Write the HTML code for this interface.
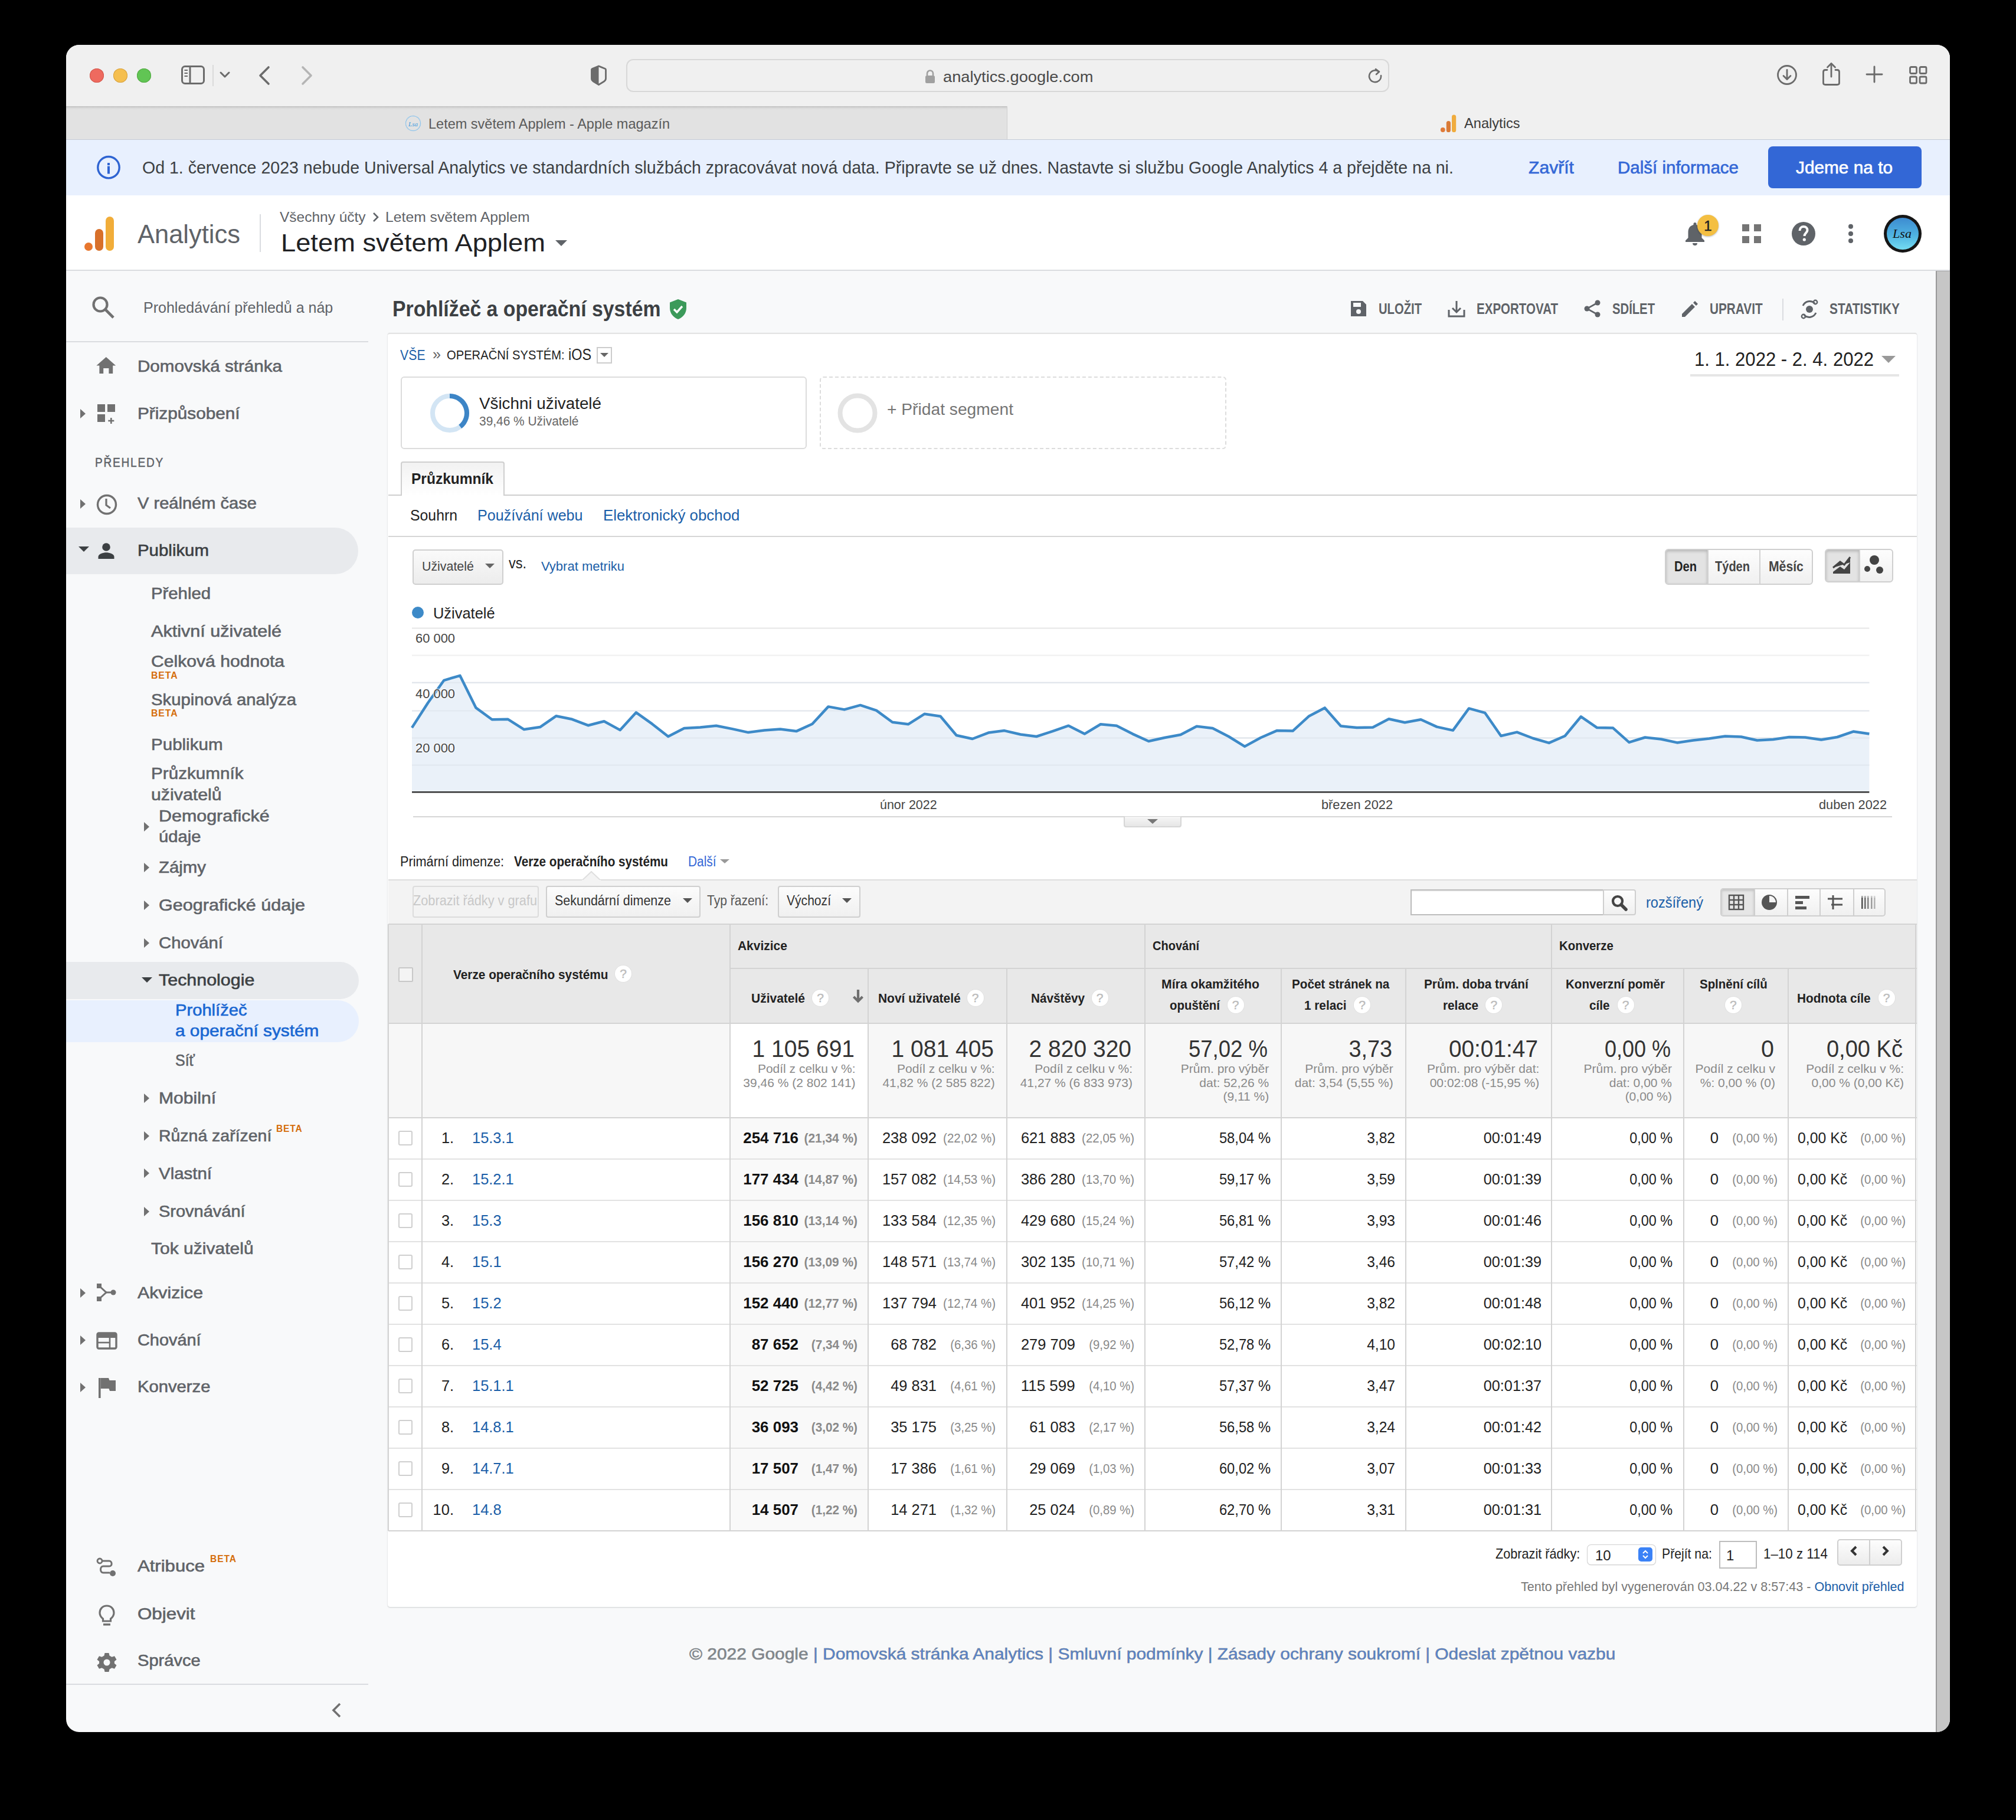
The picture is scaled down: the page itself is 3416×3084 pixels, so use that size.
<!DOCTYPE html>
<html><head><meta charset="utf-8"><style>
html,body{margin:0;padding:0;width:3416px;height:3084px;overflow:hidden;background:#000;}
.t{position:absolute;line-height:0;white-space:nowrap;}
.b{position:absolute;box-sizing:border-box;}
#win{position:absolute;left:0;top:0;width:3416px;height:3084px;clip-path:inset(76px 112px 149px 112px round 22px);}
</style></head><body><div id="win">
<div class="b" style="left:112.0px;top:76.0px;width:3192.0px;height:2859.0px;background:#f8f9fa;"></div>
<div class="b" style="left:112.0px;top:76.0px;width:3192.0px;height:160.0px;background:#f0f0f0;"></div>
<div class="b" style="left:112.0px;top:180.0px;width:1595.0px;height:56.0px;background:linear-gradient(#c9c9c9 0px,#bcbcbc 1px,#d6d6d6 2px,#e2e2e2 6px,#e2e2e2);border-right:1.5px solid #cfcfcf;"></div>
<div class="b" style="left:112.0px;top:235.5px;width:3192.0px;height:1.5px;background:#c6ccd6;"></div>
<div class="b" style="left:152px;top:116px;width:24px;height:24px;border-radius:50%;background:#ee6a5f;box-shadow:inset 0 0 0 1px #d2574c;"></div>
<div class="b" style="left:192px;top:116px;width:24px;height:24px;border-radius:50%;background:#f5bf4f;box-shadow:inset 0 0 0 1px #d6a243;"></div>
<div class="b" style="left:232px;top:116px;width:24px;height:24px;border-radius:50%;background:#61c554;box-shadow:inset 0 0 0 1px #52a842;"></div>
<svg class="b" style="left:304.0px;top:108.0px" width="46" height="38" viewBox="0 0 46 38"><rect x="4.5" y="4.5" width="37" height="29" rx="5" fill="none" stroke="#6b6b6b" stroke-width="3"/><line x1="18" y1="5" x2="18" y2="33" stroke="#6b6b6b" stroke-width="3"/><line x1="8.5" y1="11" x2="14" y2="11" stroke="#6b6b6b" stroke-width="2"/><line x1="8.5" y1="16" x2="14" y2="16" stroke="#6b6b6b" stroke-width="2"/><line x1="8.5" y1="21" x2="14" y2="21" stroke="#6b6b6b" stroke-width="2"/></svg>
<div class="b" style="left:360.0px;top:110.0px;width:2.0px;height:36.0px;background:#dadada;"></div>
<svg class="b" style="left:370.0px;top:118.0px" width="22" height="18" viewBox="0 0 22 18"><polyline points="4,5 11,12 18,5" fill="none" stroke="#6b6b6b" stroke-width="3" stroke-linecap="round" stroke-linejoin="round"/></svg>
<svg class="b" style="left:432.0px;top:108.0px" width="32" height="40" viewBox="0 0 32 40"><polyline points="23,6 9,20 23,34" fill="none" stroke="#6b6b6b" stroke-width="3.6" stroke-linecap="round" stroke-linejoin="round"/></svg>
<svg class="b" style="left:504.0px;top:108.0px" width="32" height="40" viewBox="0 0 32 40"><polyline points="9,6 23,20 9,34" fill="none" stroke="#b5b5b5" stroke-width="3.6" stroke-linecap="round" stroke-linejoin="round"/></svg>
<svg class="b" style="left:996.0px;top:106.0px" width="36" height="42" viewBox="0 0 36 42"><path d="M18.5 6 L29.5 10.5 Q30.5 11 30.5 12 V27 Q30.5 30 27.5 32 L18.5 37.5 L9.5 32 Q6.5 30 6.5 27 V12 Q6.5 11 7.5 10.5 Z" fill="none" stroke="#6b6b6b" stroke-width="2.8" stroke-linejoin="round"/><path d="M18.5 5 L7 10 Q5.5 10.7 5.5 12 V27 Q5.5 30.5 9 32.7 L18.5 38.5 Z" fill="#6b6b6b"/></svg>
<div class="b" style="left:1061.0px;top:100.0px;width:1293.0px;height:56.0px;border:2px solid #d8d8d8;border-radius:12px;background:#f0f0f0;"></div>
<svg class="b" style="left:1566.0px;top:117.0px" width="20" height="26" viewBox="0 0 20 26"><path d="M5 11 V7.5 A5 5 0 0 1 15 7.5 V11" fill="none" stroke="#a0a0a0" stroke-width="2.6"/><rect x="2" y="11" width="16" height="13" rx="2.5" fill="#a0a0a0"/></svg>
<div class="t" style="left:1597.8px;top:129.5px;font-size:26px;color:#4a4a4a;font-weight:400;font-family:'Liberation Sans';transform:scaleX(1.0477);transform-origin:0 0;"><span id="t37878bb1dc">analytics.google.com</span></div>
<svg class="b" style="left:2314.0px;top:112.0px" width="32" height="32" viewBox="0 0 32 32"><path d="M22.5 9.5 A10 10 0 1 0 26 16" fill="none" stroke="#6b6b6b" stroke-width="2.6" stroke-linecap="round"/><polyline points="17,5 23,9.5 18,14" fill="none" stroke="#6b6b6b" stroke-width="2.6" stroke-linecap="round" stroke-linejoin="round"/></svg>
<svg class="b" style="left:3007.5px;top:107.0px" width="40" height="40" viewBox="0 0 40 40"><circle cx="20" cy="20" r="15.5" fill="none" stroke="#6b6b6b" stroke-width="2.8"/><line x1="20" y1="11.5" x2="20" y2="27" stroke="#6b6b6b" stroke-width="2.8" stroke-linecap="round"/><polyline points="14,21.5 20,27.5 26,21.5" fill="none" stroke="#6b6b6b" stroke-width="2.8" stroke-linecap="round" stroke-linejoin="round"/></svg>
<svg class="b" style="left:3083.0px;top:104.0px" width="40" height="44" viewBox="0 0 40 44"><path d="M13 14.5 H10 Q6.5 14.5 6.5 18 V36.5 Q6.5 39.5 10 39.5 H30 Q33.5 39.5 33.5 36.5 V18 Q33.5 14.5 30 14.5 H27" fill="none" stroke="#6b6b6b" stroke-width="2.8" stroke-linecap="round"/><line x1="20" y1="4" x2="20" y2="26" stroke="#6b6b6b" stroke-width="2.8" stroke-linecap="round"/><polyline points="13.5,10 20,3.5 26.5,10" fill="none" stroke="#6b6b6b" stroke-width="2.8" stroke-linecap="round" stroke-linejoin="round"/></svg>
<svg class="b" style="left:3159.5px;top:110.3px" width="32" height="32" viewBox="0 0 32 32"><line x1="16" y1="3" x2="16" y2="29" stroke="#6b6b6b" stroke-width="2.9" stroke-linecap="round"/><line x1="3" y1="16" x2="29" y2="16" stroke="#6b6b6b" stroke-width="2.9" stroke-linecap="round"/></svg>
<svg class="b" style="left:3232.0px;top:109.0px" width="36" height="36" viewBox="0 0 36 36"><rect x="4.5" y="4.5" width="11" height="11" rx="2" fill="none" stroke="#6b6b6b" stroke-width="2.8"/><rect x="21" y="4.5" width="11" height="11" rx="2" fill="none" stroke="#6b6b6b" stroke-width="2.8"/><rect x="4.5" y="21" width="11" height="11" rx="2" fill="none" stroke="#6b6b6b" stroke-width="2.8"/><rect x="21" y="21" width="11" height="11" rx="2" fill="none" stroke="#6b6b6b" stroke-width="2.8"/></svg>
<svg class="b" style="left:686.0px;top:195.0px" width="28" height="28" viewBox="0 0 28 28"><circle cx="14" cy="14" r="12.5" fill="none" stroke="#6bb8f0" stroke-width="1.3" stroke-dasharray="1.5 0.8"/><text x="14" y="18.5" font-family="Liberation Serif" font-style="italic" font-size="11" fill="#3a9be0" text-anchor="middle">Lsa</text></svg>
<div class="t" style="left:726.0px;top:209.6px;font-size:24px;color:#5a5a5a;font-weight:400;font-family:'Liberation Sans';transform:scaleX(0.9795);transform-origin:0 0;"><span id="ta626f930b1">Letem světem Applem - Apple magazín</span></div>
<svg class="b" style="left:2440.0px;top:193.0px" width="30" height="32" viewBox="0 0 30 32"><circle cx="4.8" cy="27" r="3.9" fill="#e07b39"/><rect x="10.8" y="12" width="7.2" height="19" rx="3.6" fill="#d97a37"/><rect x="20" y="1.5" width="7.2" height="29.5" rx="3.6" fill="#f0ac3e"/></svg>
<div class="t" style="left:2480.5px;top:208.6px;font-size:24px;color:#3a3a3a;font-weight:400;font-family:'Liberation Sans';transform:scaleX(0.9839);transform-origin:0 0;"><span id="t96d38b7646">Analytics</span></div>
<div class="b" style="left:112.0px;top:237.0px;width:3192.0px;height:94.0px;background:#e8f0fe;"></div>
<svg class="b" style="left:162.0px;top:262.0px" width="44" height="44" viewBox="0 0 44 44"><circle cx="22" cy="21.7" r="18.2" fill="none" stroke="#2f64d2" stroke-width="3.4"/><rect x="20" y="19.5" width="4" height="13" fill="#2f64d2"/><rect x="20" y="14" width="4" height="4" fill="#2f64d2"/></svg>
<div class="t" style="left:241.0px;top:284.1px;font-size:29px;color:#3c4043;font-weight:400;font-family:'Liberation Sans';transform:scaleX(0.9838);transform-origin:0 0;"><span id="t1c1a9b1fd3">Od 1. července 2023 nebude Universal Analytics ve standardních službách zpracovávat nová data. Připravte se už dnes. Nastavte si službu Google Analytics 4 a přejděte na ni.</span></div>
<div class="t" style="left:2590.0px;top:284.1px;font-size:29px;color:#3367d6;font-weight:400;font-family:'Liberation Sans';transform:scaleX(1.0387);transform-origin:0 0;-webkit-text-stroke:0.64px #3367d6;"><span id="tc9f0a72377">Zavřít</span></div>
<div class="t" style="left:2741.0px;top:284.1px;font-size:29px;color:#3367d6;font-weight:400;font-family:'Liberation Sans';transform:scaleX(1.0175);transform-origin:0 0;-webkit-text-stroke:0.64px #3367d6;"><span id="t374efb9448">Další informace</span></div>
<div class="b" style="left:2996.0px;top:248.0px;width:260.0px;height:71.0px;background:#3367d6;border-radius:8px;"></div>
<div class="t" style="left:3043.0px;top:284.1px;font-size:29px;color:#ffffff;font-weight:400;font-family:'Liberation Sans';transform:scaleX(1.0275);transform-origin:0 0;-webkit-text-stroke:0.64px #ffffff;"><span id="t1bced2fbbe">Jdeme na to</span></div>
<div class="b" style="left:112.0px;top:331.0px;width:3192.0px;height:127.0px;background:#ffffff;"></div>
<div class="b" style="left:112.0px;top:457.0px;width:3192.0px;height:2.0px;background:#dadce0;"></div>
<svg class="b" style="left:140.0px;top:362.0px" width="60" height="70" viewBox="0 0 60 70"><circle cx="10" cy="56" r="7" fill="#e8772e"/><rect x="21" y="26" width="14" height="37" rx="7" fill="#d8702a"/><rect x="39" y="5" width="14" height="58" rx="7" fill="#f1ad39"/></svg>
<div class="t" style="left:233.0px;top:396.9px;font-size:45px;color:#5f6368;font-weight:400;font-family:'Liberation Sans';transform:scaleX(0.9663);transform-origin:0 0;"><span id="t1309319357">Analytics</span></div>
<div class="b" style="left:440.0px;top:363.0px;width:2.0px;height:64.0px;background:#dadce0;"></div>
<div class="t" style="left:474.0px;top:367.6px;font-size:24px;color:#5f6368;font-weight:400;font-family:'Liberation Sans';transform:scaleX(1.0201);transform-origin:0 0;"><span id="t292f121d49">Všechny účty</span></div>
<svg class="b" style="left:628.0px;top:355.0px" width="18" height="26" viewBox="0 0 18 26"><polyline points="5,6 12,13 5,20" fill="none" stroke="#5f6368" stroke-width="2.6"/></svg>
<div class="t" style="left:653.0px;top:367.6px;font-size:24px;color:#5f6368;font-weight:400;font-family:'Liberation Sans';transform:scaleX(1.0305);transform-origin:0 0;"><span id="t0a57e2e249">Letem světem Applem</span></div>
<div class="t" style="left:476.0px;top:410.9px;font-size:43px;color:#202124;font-weight:400;font-family:'Liberation Sans';transform:scaleX(1.0531);transform-origin:0 0;"><span id="tfc0de8efe3">Letem světem Applem</span></div>
<svg class="b" style="left:938.0px;top:404.0px" width="26" height="16" viewBox="0 0 26 16"><polygon points="3,3 23,3 13,13" fill="#5f6368"/></svg>
<svg class="b" style="left:2850.0px;top:373.0px" width="44" height="50" viewBox="0 0 44 50"><path d="M22 4 C20.5 4 19.5 5 19.5 6.5 V8 C13.5 9.5 10.5 14 10.5 20 V30 L6 34.5 V37 H38 V34.5 L33.5 30 V20 C33.5 14 30.5 9.5 24.5 8 V6.5 C24.5 5 23.5 4 22 4 Z" fill="#5f6368"/><path d="M18 39 H26 A4 4 0 0 1 18 39 Z" fill="#5f6368"/></svg>
<div class="b" style="left:2876px;top:364px;width:36px;height:36px;border-radius:50%;background:#f4bf42;box-shadow:0 1px 3px rgba(0,0,0,0.3);"></div>
<div class="t" style="left:894.0px;top:382.6px;width:4000px;text-align:center;font-size:24px;color:#202124;font-weight:400;font-family:'Liberation Sans';-webkit-text-stroke:0.53px #202124;"><span id="tad9fb440c5">1</span></div>
<svg class="b" style="left:2950.0px;top:378.0px" width="36" height="36" viewBox="0 0 36 36"><rect x="2" y="2" width="12" height="12" fill="#757575"/><rect x="22" y="2" width="12" height="12" fill="#757575"/><rect x="2" y="22" width="12" height="12" fill="#757575"/><rect x="22" y="22" width="12" height="12" fill="#757575"/></svg>
<svg class="b" style="left:3034.0px;top:374.0px" width="44" height="44" viewBox="0 0 44 44"><circle cx="22" cy="22" r="20" fill="#5f6368"/><path d="M15.5 17 C15.5 12.5 18.5 10 22 10 C26 10 28.5 12.5 28.5 16 C28.5 20.5 23.5 21 23.5 26" fill="none" stroke="#fff" stroke-width="4"/><circle cx="23.3" cy="32" r="2.6" fill="#fff"/></svg>
<svg class="b" style="left:3126.0px;top:374.0px" width="20" height="44" viewBox="0 0 20 44"><circle cx="10" cy="9.8" r="4" fill="#5f6368"/><circle cx="10" cy="21.9" r="4" fill="#5f6368"/><circle cx="10" cy="33.9" r="4" fill="#5f6368"/></svg>
<svg class="b" style="left:3190.0px;top:362.0px" width="68" height="68" viewBox="0 0 68 68"><defs><linearGradient id="av" x1="0" y1="0" x2="0" y2="1"><stop offset="0" stop-color="#3d8bd0"/><stop offset="0.55" stop-color="#4fb3e2"/><stop offset="1" stop-color="#74dcf2"/></linearGradient></defs><circle cx="34" cy="34" r="32" fill="#161616"/><circle cx="34" cy="34" r="27" fill="url(#av)"/><text x="33" y="41" font-family="Liberation Serif" font-style="italic" font-size="22" fill="#111" text-anchor="middle">Lsa</text></svg>
<div class="b" style="left:3280.0px;top:459.0px;width:24.0px;height:2476.0px;background:#c6c6c6;border-left:2px solid #999;border-right:1.5px solid #d2d2d2;border-top:1.5px solid #aaa;"></div>
<svg class="b" style="left:152.0px;top:498.0px" width="46" height="46" viewBox="0 0 46 46"><circle cx="18" cy="18" r="11.5" fill="none" stroke="#717171" stroke-width="4.2"/><line x1="26.5" y1="26.5" x2="38.5" y2="38.5" stroke="#717171" stroke-width="4.6" stroke-linecap="square"/></svg>
<div class="b" style="left:243px;top:490px;width:321px;height:60px;overflow:hidden;">
<div class="t" style="left:0.0px;top:30.9px;font-size:26px;color:#5f6368;font-weight:400;font-family:'Liberation Sans';transform:scaleX(0.962);transform-origin:0 0;"><span id="tbe48d22666">Prohledávání přehledů a nápovědy</span></div>
</div>
<div class="b" style="left:112.0px;top:578.0px;width:512.0px;height:2.0px;background:#dadce0;"></div>
<svg class="b" style="left:160.0px;top:600.0px" width="42" height="40" viewBox="0 0 42 40"><path d="M19.8 5 L36.2 19.5 H31.2 V33 H24.4 V24 H15.2 V33 H8.4 V19.5 H3.4 Z" fill="#717171"/></svg>
<div class="t" style="left:233.0px;top:621.2px;font-size:28px;color:#5f6368;font-weight:400;font-family:'Liberation Sans';transform:scaleX(1.0566);transform-origin:0 0;-webkit-text-stroke:0.62px #5f6368;"><span id="t48968eaf5b">Domovská stránka</span></div>
<svg class="b" style="left:135.0px;top:692.0px" width="12" height="18" viewBox="0 0 12 18"><polygon points="1,1 10,9 1,17" fill="#717171"/></svg>
<svg class="b" style="left:160.0px;top:680.0px" width="42" height="42" viewBox="0 0 42 42"><rect x="5" y="5" width="13" height="13" fill="#717171"/><rect x="22" y="5" width="13" height="13" fill="#717171"/><rect x="5" y="22" width="13" height="13" fill="#717171"/><rect x="27" y="28" width="2.6" height="10" fill="#717171"/><rect x="23.3" y="31.7" width="10" height="2.6" fill="#717171"/></svg>
<div class="t" style="left:233.0px;top:701.2px;font-size:28px;color:#5f6368;font-weight:400;font-family:'Liberation Sans';transform:scaleX(1.0622);transform-origin:0 0;-webkit-text-stroke:0.62px #5f6368;"><span id="t35802ec1c6">Přizpůsobení</span></div>
<div class="t" style="left:161.0px;top:784.3px;font-size:22px;color:#5f6368;font-weight:400;font-family:'Liberation Sans';transform:scaleX(0.8693);transform-origin:0 0;-webkit-text-stroke:0.48px #5f6368;letter-spacing:2px;"><span id="tb1d12f07d1">PŘEHLEDY</span></div>
<svg class="b" style="left:135.0px;top:845.0px" width="12" height="18" viewBox="0 0 12 18"><polygon points="1,1 10,9 1,17" fill="#717171"/></svg>
<svg class="b" style="left:160.0px;top:834.0px" width="42" height="42" viewBox="0 0 42 42"><circle cx="21" cy="21" r="15.5" fill="none" stroke="#717171" stroke-width="3.4"/><polyline points="20,11 20,22 27,27" fill="none" stroke="#717171" stroke-width="3.2"/></svg>
<div class="t" style="left:233.0px;top:853.2px;font-size:28px;color:#5f6368;font-weight:400;font-family:'Liberation Sans';transform:scaleX(1.0383);transform-origin:0 0;-webkit-text-stroke:0.62px #5f6368;"><span id="t131ef703a0">V reálném čase</span></div>
<div class="b" style="left:60px;top:894px;width:547px;height:79px;border-radius:0 40px 40px 0;background:#e8eaed;"></div>
<svg class="b" style="left:132.0px;top:925.0px" width="20" height="12" viewBox="0 0 20 12"><polygon points="1,1 19,1 10,10" fill="#3c4043"/></svg>
<svg class="b" style="left:160.0px;top:914.0px" width="42" height="40" viewBox="0 0 42 40"><circle cx="20" cy="13" r="6.8" fill="#3c4043"/><path d="M6.5 33 V29.5 C6.5 24.5 15 22.3 20 22.3 C25 22.3 33.5 24.5 33.5 29.5 V33 Z" fill="#3c4043"/></svg>
<div class="t" style="left:233.0px;top:933.2px;font-size:28px;color:#3c4043;font-weight:400;font-family:'Liberation Sans';transform:scaleX(1.0506);transform-origin:0 0;-webkit-text-stroke:0.62px #3c4043;"><span id="t6bb57e75b3">Publikum</span></div>
<div class="t" style="left:256.0px;top:1006.2px;font-size:28px;color:#5f6368;font-weight:400;font-family:'Liberation Sans';transform:scaleX(1.0465);transform-origin:0 0;-webkit-text-stroke:0.62px #5f6368;"><span id="t05e934500a">Přehled</span></div>
<div class="t" style="left:256.0px;top:1069.7px;font-size:28px;color:#5f6368;font-weight:400;font-family:'Liberation Sans';transform:scaleX(1.0923);transform-origin:0 0;-webkit-text-stroke:0.62px #5f6368;"><span id="t5d708542c9">Aktivní uživatelé</span></div>
<div class="t" style="left:256.0px;top:1121.2px;font-size:28px;color:#5f6368;font-weight:400;font-family:'Liberation Sans';transform:scaleX(1.0754);transform-origin:0 0;-webkit-text-stroke:0.62px #5f6368;"><span id="t2668bf533f">Celková hodnota</span></div>
<div class="t" style="left:256.0px;top:1186.2px;font-size:28px;color:#5f6368;font-weight:400;font-family:'Liberation Sans';transform:scaleX(1.0466);transform-origin:0 0;-webkit-text-stroke:0.62px #5f6368;"><span id="t2319c677bc">Skupinová analýza</span></div>
<div class="t" style="left:256.0px;top:1262.2px;font-size:28px;color:#5f6368;font-weight:400;font-family:'Liberation Sans';transform:scaleX(1.0550);transform-origin:0 0;-webkit-text-stroke:0.62px #5f6368;"><span id="t5ad5ad8fac">Publikum</span></div>
<div class="t" style="left:256.0px;top:1311.2px;font-size:28px;color:#5f6368;font-weight:400;font-family:'Liberation Sans';transform:scaleX(1.0587);transform-origin:0 0;-webkit-text-stroke:0.62px #5f6368;"><span id="tc166697d2c">Průzkumník</span></div>
<div class="t" style="left:256.0px;top:1347.2px;font-size:28px;color:#5f6368;font-weight:400;font-family:'Liberation Sans';transform:scaleX(1.0831);transform-origin:0 0;-webkit-text-stroke:0.62px #5f6368;"><span id="t0894f28b19">uživatelů</span></div>
<div class="t" style="left:256.0px;top:2116.2px;font-size:28px;color:#5f6368;font-weight:400;font-family:'Liberation Sans';transform:scaleX(1.0724);transform-origin:0 0;-webkit-text-stroke:0.62px #5f6368;"><span id="td48bea00f7">Tok uživatelů</span></div>
<div class="t" style="left:256.0px;top:1145.0px;font-size:17px;color:#d56e0c;font-weight:700;font-family:'Liberation Sans';transform:scaleX(0.9283);transform-origin:0 0;letter-spacing:1px;"><span id="te486c56ca0">BETA</span></div>
<div class="t" style="left:256.0px;top:1209.0px;font-size:17px;color:#d56e0c;font-weight:700;font-family:'Liberation Sans';transform:scaleX(0.9283);transform-origin:0 0;letter-spacing:1px;"><span id="t307cdc5db4">BETA</span></div>
<div class="t" style="left:268.5px;top:1383.2px;font-size:28px;color:#5f6368;font-weight:400;font-family:'Liberation Sans';transform:scaleX(1.0867);transform-origin:0 0;-webkit-text-stroke:0.62px #5f6368;"><span id="t071a16ef31">Demografické</span></div>
<div class="t" style="left:268.5px;top:1418.2px;font-size:28px;color:#5f6368;font-weight:400;font-family:'Liberation Sans';transform:scaleX(1.0421);transform-origin:0 0;-webkit-text-stroke:0.62px #5f6368;"><span id="t0e7b87a9d4">údaje</span></div>
<div class="t" style="left:268.5px;top:1470.2px;font-size:28px;color:#5f6368;font-weight:400;font-family:'Liberation Sans';transform:scaleX(1.0494);transform-origin:0 0;-webkit-text-stroke:0.62px #5f6368;"><span id="tae9315c043">Zájmy</span></div>
<div class="t" style="left:268.5px;top:1534.2px;font-size:28px;color:#5f6368;font-weight:400;font-family:'Liberation Sans';transform:scaleX(1.0912);transform-origin:0 0;-webkit-text-stroke:0.62px #5f6368;"><span id="t05f28bc755">Geografické údaje</span></div>
<div class="t" style="left:268.5px;top:1598.2px;font-size:28px;color:#5f6368;font-weight:400;font-family:'Liberation Sans';transform:scaleX(1.0451);transform-origin:0 0;-webkit-text-stroke:0.62px #5f6368;"><span id="t0e4c5589ac">Chování</span></div>
<div class="t" style="left:268.5px;top:1861.2px;font-size:28px;color:#5f6368;font-weight:400;font-family:'Liberation Sans';transform:scaleX(1.0746);transform-origin:0 0;-webkit-text-stroke:0.62px #5f6368;"><span id="t9c2e473389">Mobilní</span></div>
<div class="t" style="left:268.5px;top:1925.2px;font-size:28px;color:#5f6368;font-weight:400;font-family:'Liberation Sans';transform:scaleX(1.0158);transform-origin:0 0;-webkit-text-stroke:0.62px #5f6368;"><span id="t64db9e9305">Různá zařízení</span></div>
<div class="t" style="left:268.5px;top:1988.7px;font-size:28px;color:#5f6368;font-weight:400;font-family:'Liberation Sans';transform:scaleX(1.0513);transform-origin:0 0;-webkit-text-stroke:0.62px #5f6368;"><span id="tbc36d43ec1">Vlastní</span></div>
<div class="t" style="left:268.5px;top:2053.2px;font-size:28px;color:#5f6368;font-weight:400;font-family:'Liberation Sans';transform:scaleX(1.0350);transform-origin:0 0;-webkit-text-stroke:0.62px #5f6368;"><span id="t76ecf6b289">Srovnávání</span></div>
<svg class="b" style="left:243.0px;top:1392.0px" width="12" height="18" viewBox="0 0 12 18"><polygon points="1,1 10,9 1,17" fill="#717171"/></svg>
<svg class="b" style="left:243.0px;top:1461.0px" width="12" height="18" viewBox="0 0 12 18"><polygon points="1,1 10,9 1,17" fill="#717171"/></svg>
<svg class="b" style="left:243.0px;top:1525.0px" width="12" height="18" viewBox="0 0 12 18"><polygon points="1,1 10,9 1,17" fill="#717171"/></svg>
<svg class="b" style="left:243.0px;top:1589.0px" width="12" height="18" viewBox="0 0 12 18"><polygon points="1,1 10,9 1,17" fill="#717171"/></svg>
<svg class="b" style="left:243.0px;top:1852.0px" width="12" height="18" viewBox="0 0 12 18"><polygon points="1,1 10,9 1,17" fill="#717171"/></svg>
<svg class="b" style="left:243.0px;top:1916.0px" width="12" height="18" viewBox="0 0 12 18"><polygon points="1,1 10,9 1,17" fill="#717171"/></svg>
<svg class="b" style="left:243.0px;top:1979.0px" width="12" height="18" viewBox="0 0 12 18"><polygon points="1,1 10,9 1,17" fill="#717171"/></svg>
<svg class="b" style="left:243.0px;top:2044.0px" width="12" height="18" viewBox="0 0 12 18"><polygon points="1,1 10,9 1,17" fill="#717171"/></svg>
<div class="t" style="left:468.0px;top:1913.0px;font-size:17px;color:#d56e0c;font-weight:700;font-family:'Liberation Sans';transform:scaleX(0.9120);transform-origin:0 0;letter-spacing:1px;"><span id="td8a564b236">BETA</span></div>
<div class="b" style="left:60px;top:1630px;width:548px;height:63px;border-radius:0 32px 32px 0;background:#e8eaed;"></div>
<svg class="b" style="left:239.0px;top:1655.0px" width="20" height="12" viewBox="0 0 20 12"><polygon points="1,1 19,1 10,10" fill="#3c4043"/></svg>
<div class="t" style="left:268.5px;top:1661.2px;font-size:28px;color:#3c4043;font-weight:400;font-family:'Liberation Sans';transform:scaleX(1.0866);transform-origin:0 0;-webkit-text-stroke:0.62px #3c4043;"><span id="t6a62dc78d7">Technologie</span></div>
<div class="b" style="left:60px;top:1695px;width:548px;height:71px;border-radius:0 36px 36px 0;background:#e8f0fe;"></div>
<div class="t" style="left:297.0px;top:1712.2px;font-size:28px;color:#1967d2;font-weight:400;font-family:'Liberation Sans';transform:scaleX(1.0419);transform-origin:0 0;-webkit-text-stroke:0.62px #1967d2;"><span id="t8e47fef13c">Prohlížeč</span></div>
<div class="t" style="left:297.0px;top:1747.2px;font-size:28px;color:#1967d2;font-weight:400;font-family:'Liberation Sans';transform:scaleX(1.0639);transform-origin:0 0;-webkit-text-stroke:0.62px #1967d2;"><span id="t2cbc7e5a12">a operační systém</span></div>
<div class="t" style="left:297.0px;top:1797.2px;font-size:28px;color:#5f6368;font-weight:400;font-family:'Liberation Sans';transform:scaleX(0.8926);transform-origin:0 0;-webkit-text-stroke:0.62px #5f6368;"><span id="t458a84b7b8">Síť</span></div>
<svg class="b" style="left:135.0px;top:2182.0px" width="12" height="18" viewBox="0 0 12 18"><polygon points="1,1 10,9 1,17" fill="#717171"/></svg>
<svg class="b" style="left:160.0px;top:2170.0px" width="42" height="40" viewBox="0 0 42 40"><rect x="4" y="5" width="8" height="8" fill="#717171"/><rect x="4" y="27" width="8" height="8" fill="#717171"/><circle cx="32" cy="20" r="4.5" fill="#717171"/><polyline points="8,9 20,20 8,31" fill="none" stroke="#717171" stroke-width="3"/><line x1="20" y1="20" x2="30" y2="20" stroke="#717171" stroke-width="3"/></svg>
<div class="t" style="left:233.0px;top:2191.2px;font-size:28px;color:#5f6368;font-weight:400;font-family:'Liberation Sans';transform:scaleX(1.0808);transform-origin:0 0;-webkit-text-stroke:0.62px #5f6368;"><span id="t06f0ce4c9e">Akvizice</span></div>
<svg class="b" style="left:135.0px;top:2262.0px" width="12" height="18" viewBox="0 0 12 18"><polygon points="1,1 10,9 1,17" fill="#717171"/></svg>
<svg class="b" style="left:160.0px;top:2252.0px" width="42" height="40" viewBox="0 0 42 40"><rect x="5" y="7" width="32" height="26" rx="2.5" fill="none" stroke="#717171" stroke-width="3.4"/><rect x="5" y="7" width="32" height="8" fill="#717171"/><line x1="5" y1="23" x2="26" y2="23" stroke="#717171" stroke-width="2.6"/><line x1="26" y1="15" x2="26" y2="33" stroke="#717171" stroke-width="2.6"/></svg>
<div class="t" style="left:233.0px;top:2271.2px;font-size:28px;color:#5f6368;font-weight:400;font-family:'Liberation Sans';transform:scaleX(1.0316);transform-origin:0 0;-webkit-text-stroke:0.62px #5f6368;"><span id="taa7344b7b4">Chování</span></div>
<svg class="b" style="left:135.0px;top:2342.0px" width="12" height="18" viewBox="0 0 12 18"><polygon points="1,1 10,9 1,17" fill="#717171"/></svg>
<svg class="b" style="left:160.0px;top:2330.0px" width="42" height="44" viewBox="0 0 42 44"><rect x="7" y="5" width="3.6" height="34" fill="#717171"/><path d="M10.6 5 H24 L25.5 9 H36 V27 H26 L24.5 23 H10.6 Z" fill="#717171"/></svg>
<div class="t" style="left:233.0px;top:2350.2px;font-size:28px;color:#5f6368;font-weight:400;font-family:'Liberation Sans';transform:scaleX(1.0431);transform-origin:0 0;-webkit-text-stroke:0.62px #5f6368;"><span id="te490eabbd2">Konverze</span></div>
<svg class="b" style="left:160.0px;top:2636.0px" width="42" height="42" viewBox="0 0 42 42"><circle cx="9" cy="9" r="4" fill="none" stroke="#717171" stroke-width="2.8"/><path d="M13 9 H25 C30 9 31 18 25 18 H15 C9 18 9 29 15 29 H26" fill="none" stroke="#717171" stroke-width="3"/><circle cx="31" cy="30" r="5" fill="#717171"/></svg>
<div class="t" style="left:233.0px;top:2654.2px;font-size:28px;color:#5f6368;font-weight:400;font-family:'Liberation Sans';transform:scaleX(1.1098);transform-origin:0 0;-webkit-text-stroke:0.62px #5f6368;"><span id="tc018fb86eb">Atribuce</span></div>
<div class="t" style="left:356.0px;top:2642.1px;font-size:17px;color:#d56e0c;font-weight:700;font-family:'Liberation Sans';transform:scaleX(0.9140);transform-origin:0 0;letter-spacing:1px;"><span id="t57e7d9f6e2">BETA</span></div>
<svg class="b" style="left:160.0px;top:2716.0px" width="42" height="44" viewBox="0 0 42 44"><path d="M21 5 C13.5 5 9 10.5 9 17 C9 22 12 25 14.5 27 V31 H27.5 V27 C30 25 33 22 33 17 C33 10.5 28.5 5 21 5 Z" fill="none" stroke="#717171" stroke-width="3.2"/><rect x="15" y="35" width="12" height="3.5" fill="#717171"/></svg>
<div class="t" style="left:233.0px;top:2734.7px;font-size:28px;color:#5f6368;font-weight:400;font-family:'Liberation Sans';transform:scaleX(1.1187);transform-origin:0 0;-webkit-text-stroke:0.62px #5f6368;"><span id="t1a66f0836b">Objevit</span></div>
<svg class="b" style="left:160.0px;top:2796.0px" width="42" height="42" viewBox="0 0 42 42"><g transform="translate(21 21)"><path d="M-3.5 -16 H3.5 L4.5 -11.5 L8.5 -9.2 L13 -10.8 L16.5 -4.8 L12.9 -1.8 V1.8 L16.5 4.8 L13 10.8 L8.5 9.2 L4.5 11.5 L3.5 16 H-3.5 L-4.5 11.5 L-8.5 9.2 L-13 10.8 L-16.5 4.8 L-12.9 1.8 V-1.8 L-16.5 -4.8 L-13 -10.8 L-8.5 -9.2 L-4.5 -11.5 Z" fill="#717171"/><circle r="5.5" fill="#f8f9fa"/></g></svg>
<div class="t" style="left:233.0px;top:2814.2px;font-size:28px;color:#5f6368;font-weight:400;font-family:'Liberation Sans';transform:scaleX(1.0388);transform-origin:0 0;-webkit-text-stroke:0.62px #5f6368;"><span id="t95d362b16c">Správce</span></div>
<div class="b" style="left:112.0px;top:2853.0px;width:512.0px;height:2.0px;background:#dadce0;"></div>
<svg class="b" style="left:558.0px;top:2882.0px" width="24" height="32" viewBox="0 0 24 32"><polyline points="18,5 7,16 18,27" fill="none" stroke="#717171" stroke-width="3.6"/></svg>
<div class="t" style="left:664.5px;top:524.4px;font-size:36px;color:#3c4043;font-weight:700;font-family:'Liberation Sans';transform:scaleX(0.9386);transform-origin:0 0;"><span id="tc16ca4f8d1">Prohlížeč a operační systém</span></div>
<svg class="b" style="left:1132.0px;top:505.0px" width="34" height="38" viewBox="0 0 34 38"><path d="M17 2 L31 7.5 V17 C31 26 25 33 17 36 C9 33 3 26 3 17 V7.5 Z" fill="#3c9a5a"/><polyline points="10,19 15,24 24,14" fill="none" stroke="#fff" stroke-width="3.4"/></svg>
<svg class="b" style="left:2286.0px;top:507.0px" width="32" height="32" viewBox="0 0 32 32"><path d="M3 3 H23 L29 9 V29 H3 Z" fill="#5f6368"/><rect x="7" y="6" width="13" height="7" fill="#f8f9fa"/><circle cx="16" cy="21" r="4" fill="#f8f9fa"/></svg>
<div class="t" style="left:2336.0px;top:522.8px;font-size:25px;color:#5f6368;font-weight:700;font-family:'Liberation Sans';transform:scaleX(0.8087);transform-origin:0 0;"><span id="t0c85234d04">ULOŽIT</span></div>
<svg class="b" style="left:2452.0px;top:507.0px" width="32" height="32" viewBox="0 0 32 32"><path d="M3 18 V29 H29 V18" fill="none" stroke="#5f6368" stroke-width="3"/><line x1="16" y1="3" x2="16" y2="22" stroke="#5f6368" stroke-width="3"/><polyline points="9,15 16,22 23,15" fill="none" stroke="#5f6368" stroke-width="3"/></svg>
<div class="t" style="left:2502.0px;top:522.8px;font-size:25px;color:#5f6368;font-weight:700;font-family:'Liberation Sans';transform:scaleX(0.8209);transform-origin:0 0;"><span id="td014bd74fa">EXPORTOVAT</span></div>
<svg class="b" style="left:2682.0px;top:507.0px" width="32" height="32" viewBox="0 0 32 32"><circle cx="25" cy="6" r="4.5" fill="#5f6368"/><circle cx="7" cy="16" r="4.5" fill="#5f6368"/><circle cx="25" cy="26" r="4.5" fill="#5f6368"/><polyline points="25,6 7,16 25,26" fill="none" stroke="#5f6368" stroke-width="2.6"/></svg>
<div class="t" style="left:2732.0px;top:522.8px;font-size:25px;color:#5f6368;font-weight:700;font-family:'Liberation Sans';transform:scaleX(0.8099);transform-origin:0 0;"><span id="t6d71827f22">SDÍLET</span></div>
<svg class="b" style="left:2847.0px;top:507.0px" width="32" height="32" viewBox="0 0 32 32"><path d="M3 25 L20 8 L25 13 L8 30 H3 Z" fill="#5f6368"/><path d="M22 6 L25 3 L30 8 L27 11 Z" fill="#5f6368"/></svg>
<div class="t" style="left:2897.0px;top:522.8px;font-size:25px;color:#5f6368;font-weight:700;font-family:'Liberation Sans';transform:scaleX(0.8306);transform-origin:0 0;"><span id="t9afab29a62">UPRAVIT</span></div>
<div class="b" style="left:3020.0px;top:506.0px;width:2.0px;height:37.0px;background:#dadce0;"></div>
<svg class="b" style="left:3048.0px;top:506.0px" width="36" height="36" viewBox="0 0 36 36"><circle cx="18" cy="18" r="6" fill="#5f6368"/><path d="M7 12 A12.5 12.5 0 0 1 27 8" fill="none" stroke="#5f6368" stroke-width="3"/><path d="M29 24 A12.5 12.5 0 0 1 9 28" fill="none" stroke="#5f6368" stroke-width="3"/><circle cx="28" cy="6" r="3.2" fill="none" stroke="#5f6368" stroke-width="2.4"/><circle cx="8" cy="30" r="3.2" fill="none" stroke="#5f6368" stroke-width="2.4"/></svg>
<div class="t" style="left:3100.0px;top:522.8px;font-size:25px;color:#5f6368;font-weight:700;font-family:'Liberation Sans';transform:scaleX(0.8372);transform-origin:0 0;"><span id="tfa2acde756">STATISTIKY</span></div>
<div class="b" style="left:657px;top:564px;width:2591px;height:2159px;background:#fff;border-top:2px solid #e3e3e3;border-radius:4px;box-shadow:0 1px 2px rgba(60,64,67,0.22),0 0 1px rgba(60,64,67,0.15);"></div>
<div class="t" style="left:678.0px;top:601.6px;font-size:24px;color:#1a5ea8;font-weight:400;font-family:'Liberation Sans';transform:scaleX(0.8870);transform-origin:0 0;"><span id="ta86d8bd34e">VŠE</span></div>
<div class="t" style="left:733.0px;top:600.2px;font-size:25px;color:#666;font-weight:400;font-family:'Liberation Sans';"><span id="t346c32f24e">»</span></div>
<div class="t" style="left:757.0px;top:602.3px;font-size:22px;color:#222;font-weight:400;font-family:'Liberation Sans';transform:scaleX(0.9173);transform-origin:0 0;"><span id="t8d1273ca8f">OPERAČNÍ SYSTÉM:</span></div>
<div class="t" style="left:963.0px;top:600.5px;font-size:27px;color:#222;font-weight:400;font-family:'Liberation Sans';transform:scaleX(0.8664);transform-origin:0 0;"><span id="td51ed82507">iOS</span></div>
<div class="b" style="left:1011.0px;top:588.0px;width:26.0px;height:28.0px;border:2px solid #ccc;background:#fff;"></div>
<svg class="b" style="left:1016.0px;top:597.0px" width="16" height="10" viewBox="0 0 16 10"><polygon points="1,1 15,1 8,8" fill="#666"/></svg>
<div class="t" style="left:2871.0px;top:608.5px;font-size:33px;color:#222;font-weight:400;font-family:'Liberation Sans';transform:scaleX(0.9414);transform-origin:0 0;"><span id="tb68426c9aa">1. 1. 2022 - 2. 4. 2022</span></div>
<svg class="b" style="left:3186.0px;top:600.0px" width="28" height="18" viewBox="0 0 28 18"><polygon points="2,3 26,3 14,15" fill="#999"/></svg>
<div class="b" style="left:2864.0px;top:634.0px;width:354.0px;height:4.0px;background:#e6e6e6;"></div>
<div class="b" style="left:679.0px;top:638.0px;width:688.0px;height:123.0px;border:2px solid #dcdcdc;border-radius:6px;background:#fff;"></div>
<svg class="b" style="left:726.0px;top:664.0px" width="72" height="72" viewBox="0 0 72 72"><circle cx="36" cy="36" r="29" fill="none" stroke="#d3e5f4" stroke-width="8"/><path d="M36 7 A29 29 0 0 1 53.8 58.9" fill="none" stroke="#3d85c6" stroke-width="8"/></svg>
<div class="t" style="left:812.0px;top:683.5px;font-size:27px;color:#222;font-weight:400;font-family:'Liberation Sans';transform:scaleX(1.0293);transform-origin:0 0;"><span id="t06dce9f875">Všichni uživatelé</span></div>
<div class="t" style="left:812.0px;top:714.3px;font-size:22px;color:#666;font-weight:400;font-family:'Liberation Sans';transform:scaleX(0.9502);transform-origin:0 0;"><span id="t18891036d0">39,46 % Uživatelé</span></div>
<div class="b" style="left:1389.0px;top:638.0px;width:689.0px;height:123.0px;border:2px dashed #dcdcdc;border-radius:6px;background:#fff;"></div>
<svg class="b" style="left:1417.0px;top:664.0px" width="72" height="72" viewBox="0 0 72 72"><circle cx="36" cy="36" r="29.5" fill="none" stroke="#e3e3e3" stroke-width="8"/></svg>
<div class="t" style="left:1503.0px;top:694.2px;font-size:28px;color:#757575;font-weight:400;font-family:'Liberation Sans';transform:scaleX(1.0073);transform-origin:0 0;"><span id="t0351f37dee">+ Přidat segment</span></div>
<div class="b" style="left:658.0px;top:838.0px;width:2590.0px;height:2.0px;background:#cfcfcf;"></div>
<div class="b" style="left:679px;top:782px;width:176px;height:58px;border:2px solid #cfcfcf;border-bottom:none;border-radius:4px 4px 0 0;background:linear-gradient(#f2f2f2,#fff);"></div>
<div class="t" style="left:697.0px;top:810.9px;font-size:26px;color:#222;font-weight:700;font-family:'Liberation Sans';transform:scaleX(0.9432);transform-origin:0 0;"><span id="tf01d7d50b2">Průzkumník</span></div>
<div class="t" style="left:694.6px;top:872.5px;font-size:26px;color:#222;font-weight:400;font-family:'Liberation Sans';transform:scaleX(0.9542);transform-origin:0 0;"><span id="t0c5e5dbe77">Souhrn</span></div>
<div class="t" style="left:809.0px;top:872.5px;font-size:26px;color:#1a5ea8;font-weight:400;font-family:'Liberation Sans';transform:scaleX(0.9648);transform-origin:0 0;"><span id="t4f054eb105">Používání webu</span></div>
<div class="t" style="left:1021.6px;top:872.5px;font-size:26px;color:#1a5ea8;font-weight:400;font-family:'Liberation Sans';transform:scaleX(0.9945);transform-origin:0 0;"><span id="t792d4fedaa">Elektronický obchod</span></div>
<div class="b" style="left:658.0px;top:907.5px;width:2590.0px;height:2.0px;background:#d6d6d6;"></div>
<div class="b" style="left:699px;top:931px;width:154px;height:60px;border:2px solid #cfcfcf;border-radius:5px;background:linear-gradient(#fafafa,#ececec);"></div>
<div class="t" style="left:714.7px;top:959.8px;font-size:22px;color:#444;font-weight:400;font-family:'Liberation Sans';transform:scaleX(0.9703);transform-origin:0 0;"><span id="t1c6035f20f">Uživatelé</span></div>
<svg class="b" style="left:821.0px;top:954.0px" width="18" height="12" viewBox="0 0 18 12"><polygon points="1,1 17,1 9,9" fill="#666"/></svg>
<div class="t" style="left:862.0px;top:954.2px;font-size:25px;color:#222;font-weight:400;font-family:'Liberation Sans';transform:scaleX(0.9389);transform-origin:0 0;"><span id="t0e7d39bdb4">vs.</span></div>
<div class="t" style="left:917.0px;top:959.8px;font-size:22px;color:#1a5ea8;font-weight:400;font-family:'Liberation Sans';"><span id="t90c1008111">Vybrat metriku</span></div>
<div class="b" style="left:2821px;top:930px;width:251px;height:61px;border:2px solid #cfcfcf;border-radius:6px;background:linear-gradient(#fdfdfd,#f0f0f0);overflow:hidden;"><div class="b" style="left:0;top:0;width:70px;height:57px;background:#e3e3e3;box-shadow:inset 0 2px 5px rgba(0,0,0,0.22);"></div><div class="b" style="left:70px;top:0;width:2px;height:57px;background:#d2d2d2;"></div><div class="b" style="left:158px;top:0;width:2px;height:57px;background:#d2d2d2;"></div></div>
<div class="t" style="left:2837.0px;top:960.0px;font-size:23px;color:#222;font-weight:700;font-family:'Liberation Sans';transform:scaleX(0.8745);transform-origin:0 0;"><span id="t408cb0198b">Den</span></div>
<div class="t" style="left:2906.0px;top:960.0px;font-size:23px;color:#444;font-weight:700;font-family:'Liberation Sans';transform:scaleX(0.8710);transform-origin:0 0;"><span id="t10da94a72a">Týden</span></div>
<div class="t" style="left:2996.7px;top:960.0px;font-size:23px;color:#444;font-weight:700;font-family:'Liberation Sans';transform:scaleX(0.9196);transform-origin:0 0;"><span id="tecc014ed40">Měsíc</span></div>
<div class="b" style="left:3092px;top:930px;width:116px;height:57px;border:2px solid #cfcfcf;border-radius:6px;background:linear-gradient(#fdfdfd,#f0f0f0);overflow:hidden;"><div class="b" style="left:0;top:0;width:56px;height:53px;background:#e3e3e3;box-shadow:inset 0 2px 5px rgba(0,0,0,0.22);"></div><div class="b" style="left:56px;top:0;width:2px;height:53px;background:#d2d2d2;"></div></div>
<svg class="b" style="left:3104.0px;top:940.0px" width="34" height="36" viewBox="0 0 34 36"><path d="M2 22 L14 12 L21 17 L31 4 V32 H2 V29 L14 20 L21 25 L31 13" fill="#444"/><polyline points="2,22 14,12 21,17 31,4" fill="none" stroke="#444" stroke-width="3"/></svg>
<svg class="b" style="left:3156.0px;top:938.0px" width="40" height="40" viewBox="0 0 40 40"><circle cx="20" cy="11" r="8" fill="#444"/><circle cx="8" cy="26" r="5" fill="#444"/><circle cx="29" cy="28" r="6" fill="#444"/></svg>
<div class="b" style="left:698px;top:1028px;width:20px;height:20px;border-radius:50%;background:#3d8ac8;"></div>
<div class="t" style="left:734.0px;top:1038.9px;font-size:26px;color:#222;font-weight:400;font-family:'Liberation Sans';transform:scaleX(0.9781);transform-origin:0 0;"><span id="tc3ac15f42a">Uživatelé</span></div>
<svg class="b" style="left:690.0px;top:1050.0px" width="2490" height="310" viewBox="0 0 2490 310"><line x1="8.0" y1="14.5" x2="2477.4" y2="14.5" stroke="#e6e6e6" stroke-width="2"/><line x1="8.0" y1="60.6" x2="2477.4" y2="60.6" stroke="#f0f0f0" stroke-width="2"/><line x1="8.0" y1="106.7" x2="2477.4" y2="106.7" stroke="#e6e6e6" stroke-width="2"/><line x1="8.0" y1="154.4" x2="2477.4" y2="154.4" stroke="#f0f0f0" stroke-width="2"/><line x1="8.0" y1="200.5" x2="2477.4" y2="200.5" stroke="#e6e6e6" stroke-width="2"/><line x1="8.0" y1="246.6" x2="2477.4" y2="246.6" stroke="#f0f0f0" stroke-width="2"/><polygon points="8.0,292.0 8.0,183.1 35.1,141.0 62.3,102.8 89.4,94.8 116.5,149.4 143.7,169.2 170.8,168.8 198.0,186.1 225.1,182.1 252.2,163.3 279.4,168.8 306.5,179.2 333.6,172.2 360.8,187.1 387.9,157.3 415.0,176.7 442.2,198.0 469.3,184.1 496.5,182.6 523.6,179.7 550.7,185.1 577.9,191.1 605.0,187.6 632.1,185.6 659.3,189.1 686.4,176.7 713.5,147.4 740.7,152.4 767.8,144.9 795.0,153.9 822.1,173.7 849.2,177.2 876.4,159.8 903.5,163.8 930.6,196.0 957.8,202.0 984.9,191.6 1012.0,188.1 1039.2,194.5 1066.3,198.0 1093.5,189.1 1120.6,179.7 1147.7,193.6 1174.9,177.2 1202.0,179.7 1229.1,193.6 1256.3,206.0 1283.4,200.0 1310.5,195.0 1337.7,180.7 1364.8,184.1 1391.9,198.0 1419.1,214.9 1446.2,200.0 1473.4,188.1 1500.5,188.6 1527.6,163.8 1554.8,149.4 1581.9,180.2 1609.0,183.1 1636.2,182.6 1663.3,168.3 1690.4,174.2 1717.6,169.2 1744.7,181.6 1771.9,187.6 1799.0,150.4 1826.1,157.8 1853.3,197.0 1880.4,190.6 1907.5,201.0 1934.7,208.9 1961.8,197.0 1988.9,164.3 2016.1,183.1 2043.2,183.6 2070.4,207.9 2097.5,199.5 2124.6,202.5 2151.8,208.4 2178.9,204.5 2206.0,201.5 2233.2,197.5 2260.3,198.5 2287.4,204.5 2314.6,203.0 2341.7,199.0 2368.9,199.5 2396.0,203.5 2423.1,199.0 2450.3,189.6 2477.4,193.6 2477.4,292.0" fill="#eaf1f9"/><line x1="8.0" y1="106.7" x2="2477.4" y2="106.7" stroke="#dfe6ee" stroke-width="2" opacity="0.8"/><line x1="8.0" y1="154.4" x2="2477.4" y2="154.4" stroke="#dfe6ee" stroke-width="2" opacity="0.8"/><line x1="8.0" y1="200.5" x2="2477.4" y2="200.5" stroke="#dfe6ee" stroke-width="2" opacity="0.8"/><line x1="8.0" y1="246.6" x2="2477.4" y2="246.6" stroke="#dfe6ee" stroke-width="2" opacity="0.8"/><polyline points="8.0,183.1 35.1,141.0 62.3,102.8 89.4,94.8 116.5,149.4 143.7,169.2 170.8,168.8 198.0,186.1 225.1,182.1 252.2,163.3 279.4,168.8 306.5,179.2 333.6,172.2 360.8,187.1 387.9,157.3 415.0,176.7 442.2,198.0 469.3,184.1 496.5,182.6 523.6,179.7 550.7,185.1 577.9,191.1 605.0,187.6 632.1,185.6 659.3,189.1 686.4,176.7 713.5,147.4 740.7,152.4 767.8,144.9 795.0,153.9 822.1,173.7 849.2,177.2 876.4,159.8 903.5,163.8 930.6,196.0 957.8,202.0 984.9,191.6 1012.0,188.1 1039.2,194.5 1066.3,198.0 1093.5,189.1 1120.6,179.7 1147.7,193.6 1174.9,177.2 1202.0,179.7 1229.1,193.6 1256.3,206.0 1283.4,200.0 1310.5,195.0 1337.7,180.7 1364.8,184.1 1391.9,198.0 1419.1,214.9 1446.2,200.0 1473.4,188.1 1500.5,188.6 1527.6,163.8 1554.8,149.4 1581.9,180.2 1609.0,183.1 1636.2,182.6 1663.3,168.3 1690.4,174.2 1717.6,169.2 1744.7,181.6 1771.9,187.6 1799.0,150.4 1826.1,157.8 1853.3,197.0 1880.4,190.6 1907.5,201.0 1934.7,208.9 1961.8,197.0 1988.9,164.3 2016.1,183.1 2043.2,183.6 2070.4,207.9 2097.5,199.5 2124.6,202.5 2151.8,208.4 2178.9,204.5 2206.0,201.5 2233.2,197.5 2260.3,198.5 2287.4,204.5 2314.6,203.0 2341.7,199.0 2368.9,199.5 2396.0,203.5 2423.1,199.0 2450.3,189.6 2477.4,193.6" fill="none" stroke="#3d8ac8" stroke-width="4.5" stroke-linejoin="round"/><line x1="8.0" y1="292.3" x2="2477.4" y2="292.3" stroke="#333" stroke-width="2.4"/></svg>
<div class="t" style="left:703.6px;top:1082.3px;font-size:22px;color:#444;font-weight:400;font-family:'Liberation Sans';transform:scaleX(0.9956);transform-origin:0 0;text-shadow:0 0 3px #fff,0 0 3px #fff,0 0 2px #fff;"><span id="t0d3b0d2393">60 000</span></div>
<div class="t" style="left:703.6px;top:1175.8px;font-size:22px;color:#444;font-weight:400;font-family:'Liberation Sans';transform:scaleX(0.9956);transform-origin:0 0;text-shadow:0 0 3px #fff,0 0 3px #fff,0 0 2px #fff;"><span id="tac50c55403">40 000</span></div>
<div class="t" style="left:703.6px;top:1268.3px;font-size:22px;color:#444;font-weight:400;font-family:'Liberation Sans';transform:scaleX(0.9956);transform-origin:0 0;text-shadow:0 0 3px #fff,0 0 3px #fff,0 0 2px #fff;"><span id="t2e86cc1e66">20 000</span></div>
<div class="t" style="left:1491.0px;top:1364.3px;font-size:22px;color:#444;font-weight:400;font-family:'Liberation Sans';transform:scaleX(0.9748);transform-origin:0 0;"><span id="t51beaa25f4">únor 2022</span></div>
<div class="t" style="left:2239.0px;top:1364.3px;font-size:22px;color:#444;font-weight:400;font-family:'Liberation Sans';transform:scaleX(0.9892);transform-origin:0 0;"><span id="t66dbc43767">březen 2022</span></div>
<div class="t" style="left:3082.0px;top:1364.3px;font-size:22px;color:#444;font-weight:400;font-family:'Liberation Sans';transform:scaleX(0.9894);transform-origin:0 0;"><span id="t409ee02ceb">duben 2022</span></div>
<div class="b" style="left:700.0px;top:1383.0px;width:2506.0px;height:2.0px;background:#d6d6d6;"></div>
<div class="b" style="left:1904px;top:1384px;width:98px;height:18px;border:2px solid #d6d6d6;border-top:none;border-radius:0 0 4px 4px;background:linear-gradient(#f6f6f6,#e6e6e6);"></div>
<svg class="b" style="left:1942.0px;top:1386.0px" width="22" height="12" viewBox="0 0 22 12"><polygon points="2,2 20,2 11,10" fill="#777"/></svg>
<div class="t" style="left:678.4px;top:1460.0px;font-size:23px;color:#222;font-weight:400;font-family:'Liberation Sans';transform:scaleX(0.9431);transform-origin:0 0;"><span id="t0e405889bd">Primární dimenze:</span></div>
<div class="t" style="left:871.0px;top:1460.0px;font-size:23px;color:#222;font-weight:700;font-family:'Liberation Sans';transform:scaleX(0.8994);transform-origin:0 0;"><span id="t3ca0c2eade">Verze operačního systému</span></div>
<div class="t" style="left:1166.0px;top:1460.0px;font-size:23px;color:#3367d6;font-weight:400;font-family:'Liberation Sans';transform:scaleX(0.9083);transform-origin:0 0;"><span id="t5ed90552d5">Další</span></div>
<svg class="b" style="left:1218.0px;top:1454.0px" width="20" height="12" viewBox="0 0 20 12"><polygon points="2,2 18,2 10,9" fill="#999"/></svg>
<div class="b" style="left:658.0px;top:1490.0px;width:2590.0px;height:76.0px;background:#f3f3f3;border-top:2px solid #dedede;"></div>
<svg class="b" style="left:986.0px;top:1476.0px" width="32" height="18" viewBox="0 0 32 18"><polygon points="0,16 16,1 32,16" fill="#f3f3f3" stroke="#dedede" stroke-width="2"/><rect x="0" y="15" width="32" height="4" fill="#f3f3f3"/></svg>
<div class="b" style="left:698.5px;top:1501.0px;width:214.5px;height:54.0px;border:2px solid #dcdcdc;border-radius:4px;background:#f3f3f3;"></div>
<div class="t" style="left:700.0px;top:1526.0px;font-size:23px;color:#c8c8c8;font-weight:400;font-family:'Liberation Sans';transform:scaleX(0.9441);transform-origin:0 0;"><span id="tdecff230ba">Zobrazit řádky v grafu</span></div>
<div class="b" style="left:925px;top:1501px;width:262px;height:54px;border:2px solid #cfcfcf;border-radius:4px;background:linear-gradient(#fcfcfc,#f0f0f0);"></div>
<div class="t" style="left:940.0px;top:1526.0px;font-size:23px;color:#333;font-weight:400;font-family:'Liberation Sans';transform:scaleX(0.9338);transform-origin:0 0;"><span id="tc5eb8ed074">Sekundární dimenze</span></div>
<svg class="b" style="left:1156.0px;top:1521.0px" width="18" height="12" viewBox="0 0 18 12"><polygon points="1,1 17,1 9,9" fill="#555"/></svg>
<div class="t" style="left:1198.0px;top:1526.0px;font-size:23px;color:#555;font-weight:400;font-family:'Liberation Sans';transform:scaleX(0.9140);transform-origin:0 0;"><span id="t09a9c0f5d0">Typ řazení:</span></div>
<div class="b" style="left:1318px;top:1501px;width:140px;height:54px;border:2px solid #cfcfcf;border-radius:4px;background:linear-gradient(#fcfcfc,#f0f0f0);"></div>
<div class="t" style="left:1333.0px;top:1526.0px;font-size:23px;color:#333;font-weight:400;font-family:'Liberation Sans';transform:scaleX(0.9166);transform-origin:0 0;"><span id="t7df55f79d2">Výchozí</span></div>
<svg class="b" style="left:1426.0px;top:1521.0px" width="18" height="12" viewBox="0 0 18 12"><polygon points="1,1 17,1 9,9" fill="#555"/></svg>
<div class="b" style="left:2389.5px;top:1507.0px;width:327.5px;height:44.4px;border:2px solid #bdbdbd;border-right:none;background:#fff;box-shadow:inset 0 1px 2px rgba(0,0,0,0.12);"></div>
<div class="b" style="left:2716px;top:1507px;width:56px;height:44.4px;border:2px solid #cfcfcf;border-radius:0 4px 4px 0;background:linear-gradient(#fdfdfd,#f0f0f0);"></div>
<svg class="b" style="left:2728.0px;top:1514.0px" width="34" height="32" viewBox="0 0 34 32"><circle cx="13" cy="13" r="8" fill="none" stroke="#444" stroke-width="4.2"/><line x1="19" y1="19" x2="27" y2="27" stroke="#444" stroke-width="5.5" stroke-linecap="round"/></svg>
<div class="t" style="left:2788.6px;top:1528.9px;font-size:26px;color:#1a5ea8;font-weight:400;font-family:'Liberation Sans';transform:scaleX(0.9072);transform-origin:0 0;"><span id="td3c977b27a">rozšířený</span></div>
<div class="b" style="left:2914.5px;top:1505px;width:280px;height:48px;border:2px solid #cfcfcf;border-radius:5px;background:linear-gradient(#fdfdfd,#f0f0f0);overflow:hidden;"><div class="b" style="left:0;top:0;width:55px;height:44px;background:#e6e6e6;box-shadow:inset 0 2px 4px rgba(0,0,0,0.18);"></div><div class="b" style="left:55px;top:0;width:2px;height:44px;background:#cfcfcf;"></div><div class="b" style="left:111px;top:0;width:2px;height:44px;background:#cfcfcf;"></div><div class="b" style="left:166.5px;top:0;width:2px;height:44px;background:#cfcfcf;"></div><div class="b" style="left:223px;top:0;width:2px;height:44px;background:#cfcfcf;"></div></div>
<svg class="b" style="left:2928.0px;top:1515.0px" width="28" height="28" viewBox="0 0 28 28"><rect x="2" y="2" width="24" height="24" fill="none" stroke="#555" stroke-width="2.4"/><line x1="10" y1="2" x2="10" y2="26" stroke="#555" stroke-width="2.4"/><line x1="18" y1="2" x2="18" y2="26" stroke="#555" stroke-width="2.4"/><line x1="2" y1="10" x2="26" y2="10" stroke="#555" stroke-width="2.4"/><line x1="2" y1="18" x2="26" y2="18" stroke="#555" stroke-width="2.4"/></svg>
<svg class="b" style="left:2984.0px;top:1515.0px" width="28" height="28" viewBox="0 0 28 28"><circle cx="14" cy="14" r="13" fill="#555"/><path d="M14 14 V3 A11 11 0 0 1 25 14 Z" fill="#f4f4f4"/></svg>
<svg class="b" style="left:3040.0px;top:1515.0px" width="28" height="28" viewBox="0 0 28 28"><rect x="2" y="3" width="24" height="5" fill="#555"/><rect x="2" y="12" width="13" height="5" fill="#555"/><rect x="2" y="21" width="19" height="5" fill="#555"/></svg>
<svg class="b" style="left:3096.0px;top:1515.0px" width="28" height="28" viewBox="0 0 28 28"><line x1="1" y1="8" x2="26" y2="8" stroke="#555" stroke-width="3"/><line x1="7" y1="18" x2="26" y2="18" stroke="#555" stroke-width="3"/><line x1="10" y1="2" x2="10" y2="26" stroke="#555" stroke-width="3"/></svg>
<svg class="b" style="left:3152.0px;top:1515.0px" width="28" height="28" viewBox="0 0 28 28"><rect x="2" y="3" width="2.6" height="22" fill="#555" opacity="1.00"/><rect x="7" y="3" width="2.6" height="22" fill="#555" opacity="0.85"/><rect x="12" y="3" width="2.6" height="22" fill="#555" opacity="0.70"/><rect x="18" y="3" width="2.6" height="22" fill="#555" opacity="0.55"/><rect x="23" y="3" width="2.6" height="22" fill="#555" opacity="0.40"/><rect x="2" y="3" width="24" height="3" fill="#f4f4f4" opacity="0.5"/></svg>
<div class="b" style="left:658.0px;top:1566.0px;width:2590.0px;height:168.0px;background:#e8e8e8;"></div>
<div class="b" style="left:658.0px;top:1734.0px;width:2590.0px;height:160.0px;background:#f7f7f7;"></div>
<div class="b" style="left:1237.0px;top:1734.0px;width:234.0px;height:160.0px;background:#fff;"></div>
<div class="b" style="left:658.0px;top:1894.0px;width:2590.0px;height:700.0px;background:#fff;"></div>
<div class="b" style="left:1237.0px;top:1894.0px;width:234.0px;height:700.0px;background:#f9f9f9;"></div>
<div class="b" style="left:658.0px;top:1565.0px;width:2590.0px;height:2.0px;background:#d3d3d3;"></div>
<div class="b" style="left:1237.0px;top:1640.0px;width:2011.0px;height:2.0px;background:#d3d3d3;"></div>
<div class="b" style="left:658.0px;top:1733.0px;width:2590.0px;height:2.0px;background:#d3d3d3;"></div>
<div class="b" style="left:658.0px;top:1893.0px;width:2590.0px;height:2.0px;background:#d3d3d3;"></div>
<div class="b" style="left:658.0px;top:1963.0px;width:2590.0px;height:2.0px;background:#e2e2e2;"></div>
<div class="b" style="left:658.0px;top:2033.0px;width:2590.0px;height:2.0px;background:#e2e2e2;"></div>
<div class="b" style="left:658.0px;top:2103.0px;width:2590.0px;height:2.0px;background:#e2e2e2;"></div>
<div class="b" style="left:658.0px;top:2173.0px;width:2590.0px;height:2.0px;background:#e2e2e2;"></div>
<div class="b" style="left:658.0px;top:2243.0px;width:2590.0px;height:2.0px;background:#e2e2e2;"></div>
<div class="b" style="left:658.0px;top:2313.0px;width:2590.0px;height:2.0px;background:#e2e2e2;"></div>
<div class="b" style="left:658.0px;top:2383.0px;width:2590.0px;height:2.0px;background:#e2e2e2;"></div>
<div class="b" style="left:658.0px;top:2453.0px;width:2590.0px;height:2.0px;background:#e2e2e2;"></div>
<div class="b" style="left:658.0px;top:2523.0px;width:2590.0px;height:2.0px;background:#e2e2e2;"></div>
<div class="b" style="left:658.0px;top:2593.0px;width:2590.0px;height:2.0px;background:#d3d3d3;"></div>
<div class="b" style="left:657.0px;top:1566.0px;width:2.0px;height:1028.0px;background:#d3d3d3;"></div>
<div class="b" style="left:714.0px;top:1566.0px;width:2.0px;height:1028.0px;background:#d3d3d3;"></div>
<div class="b" style="left:1236.0px;top:1566.0px;width:2.0px;height:1028.0px;background:#d3d3d3;"></div>
<div class="b" style="left:1470.0px;top:1641.0px;width:2.0px;height:953.0px;background:#d3d3d3;"></div>
<div class="b" style="left:1704.6px;top:1641.0px;width:2.0px;height:953.0px;background:#d3d3d3;"></div>
<div class="b" style="left:1939.0px;top:1566.0px;width:2.0px;height:1028.0px;background:#d3d3d3;"></div>
<div class="b" style="left:2170.2px;top:1641.0px;width:2.0px;height:953.0px;background:#d3d3d3;"></div>
<div class="b" style="left:2381.3px;top:1641.0px;width:2.0px;height:953.0px;background:#d3d3d3;"></div>
<div class="b" style="left:2628.2px;top:1566.0px;width:2.0px;height:1028.0px;background:#d3d3d3;"></div>
<div class="b" style="left:2851.5px;top:1641.0px;width:2.0px;height:953.0px;background:#d3d3d3;"></div>
<div class="b" style="left:3029.0px;top:1641.0px;width:2.0px;height:953.0px;background:#d3d3d3;"></div>
<div class="b" style="left:3245.0px;top:1566.0px;width:2.0px;height:1028.0px;background:#d3d3d3;"></div>
<div class="b" style="left:674.5px;top:1639.0px;width:25.5px;height:25.0px;border:2px solid #c8c8c8;border-radius:2px;background:#f4f4f4;"></div>
<div class="t" style="left:1249.7px;top:1603.1px;font-size:22.5px;color:#222;font-weight:700;font-family:'Liberation Sans';transform:scaleX(0.9304);transform-origin:0 0;"><span id="t4c96617926">Akvizice</span></div>
<div class="t" style="left:1952.6px;top:1603.1px;font-size:22.5px;color:#222;font-weight:700;font-family:'Liberation Sans';transform:scaleX(0.8900);transform-origin:0 0;"><span id="tf6e3fcf135">Chování</span></div>
<div class="t" style="left:2642.0px;top:1603.1px;font-size:22.5px;color:#222;font-weight:700;font-family:'Liberation Sans';transform:scaleX(0.9063);transform-origin:0 0;"><span id="tb24d2325fc">Konverze</span></div>
<div class="t" style="left:768.0px;top:1651.6px;font-size:22.5px;color:#222;font-weight:700;font-family:'Liberation Sans';transform:scaleX(0.9244);transform-origin:0 0;"><span id="te550ff04d5">Verze operačního systému</span></div>
<div class="b" style="left:1042.0px;top:1636.0px;width:28px;height:28px;border-radius:50%;background:#fff;box-shadow:0 0 0 1px #e0e0e0;"></div>
<div class="t" style="left:-944.0px;top:1650.2px;width:4000px;text-align:center;font-size:21px;color:#bdbdbd;font-weight:400;font-family:'Liberation Sans';-webkit-text-stroke:0.46px #bdbdbd;"><span id="ta458f2d36d">?</span></div>
<div class="t" style="left:1273.0px;top:1692.2px;font-size:22.5px;color:#222;font-weight:700;font-family:'Liberation Sans';transform:scaleX(0.9328);transform-origin:0 0;"><span id="t94d0501c48">Uživatelé</span></div>
<div class="b" style="left:1376.0px;top:1677.0px;width:28px;height:28px;border-radius:50%;background:#fff;box-shadow:0 0 0 1px #e0e0e0;"></div>
<div class="t" style="left:-610.0px;top:1691.2px;width:4000px;text-align:center;font-size:21px;color:#bdbdbd;font-weight:400;font-family:'Liberation Sans';-webkit-text-stroke:0.46px #bdbdbd;"><span id="tb758ae6b59">?</span></div>
<svg class="b" style="left:1443.0px;top:1674.0px" width="22" height="30" viewBox="0 0 22 30"><line x1="11" y1="3" x2="11" y2="22" stroke="#6f6f6f" stroke-width="4.2"/><polyline points="3.5,15 11,22.5 18.5,15" fill="none" stroke="#6f6f6f" stroke-width="4.2"/></svg>
<div class="t" style="left:1488.0px;top:1692.2px;font-size:22.5px;color:#222;font-weight:700;font-family:'Liberation Sans';transform:scaleX(0.9303);transform-origin:0 0;"><span id="t5cb0f028f2">Noví uživatelé</span></div>
<div class="b" style="left:1638.7px;top:1677.0px;width:28px;height:28px;border-radius:50%;background:#fff;box-shadow:0 0 0 1px #e0e0e0;"></div>
<div class="t" style="left:-347.3px;top:1691.2px;width:4000px;text-align:center;font-size:21px;color:#bdbdbd;font-weight:400;font-family:'Liberation Sans';-webkit-text-stroke:0.46px #bdbdbd;"><span id="t094c135245">?</span></div>
<div class="t" style="left:1746.8px;top:1692.2px;font-size:22.5px;color:#222;font-weight:700;font-family:'Liberation Sans';transform:scaleX(0.9208);transform-origin:0 0;"><span id="tee955e8160">Návštěvy</span></div>
<div class="b" style="left:1849.6px;top:1677.0px;width:28px;height:28px;border-radius:50%;background:#fff;box-shadow:0 0 0 1px #e0e0e0;"></div>
<div class="t" style="left:-136.4px;top:1691.2px;width:4000px;text-align:center;font-size:21px;color:#bdbdbd;font-weight:400;font-family:'Liberation Sans';-webkit-text-stroke:0.46px #bdbdbd;"><span id="tb6a99fcbef">?</span></div>
<div class="t" style="left:1968.0px;top:1668.1px;font-size:22.5px;color:#222;font-weight:700;font-family:'Liberation Sans';transform:scaleX(0.9416);transform-origin:0 0;"><span id="t469c58cf23">Míra okamžitého</span></div>
<div class="t" style="left:1982.3px;top:1704.1px;font-size:22.5px;color:#222;font-weight:700;font-family:'Liberation Sans';transform:scaleX(0.9066);transform-origin:0 0;"><span id="t3c8b51b987">opuštění</span></div>
<div class="b" style="left:2079.6px;top:1689.0px;width:28px;height:28px;border-radius:50%;background:#fff;box-shadow:0 0 0 1px #e0e0e0;"></div>
<div class="t" style="left:93.6px;top:1703.2px;width:4000px;text-align:center;font-size:21px;color:#bdbdbd;font-weight:400;font-family:'Liberation Sans';-webkit-text-stroke:0.46px #bdbdbd;"><span id="tb321ce401a">?</span></div>
<div class="t" style="left:2189.4px;top:1668.1px;font-size:22.5px;color:#222;font-weight:700;font-family:'Liberation Sans';transform:scaleX(0.9180);transform-origin:0 0;"><span id="t11333a7892">Počet stránek na</span></div>
<div class="t" style="left:2210.3px;top:1704.1px;font-size:22.5px;color:#222;font-weight:700;font-family:'Liberation Sans';transform:scaleX(0.9216);transform-origin:0 0;"><span id="t3e1c1cf401">1 relaci</span></div>
<div class="b" style="left:2294.0px;top:1689.0px;width:28px;height:28px;border-radius:50%;background:#fff;box-shadow:0 0 0 1px #e0e0e0;"></div>
<div class="t" style="left:308.0px;top:1703.2px;width:4000px;text-align:center;font-size:21px;color:#bdbdbd;font-weight:400;font-family:'Liberation Sans';-webkit-text-stroke:0.46px #bdbdbd;"><span id="t513ee562c8">?</span></div>
<div class="t" style="left:2412.7px;top:1668.1px;font-size:22.5px;color:#222;font-weight:700;font-family:'Liberation Sans';transform:scaleX(0.9237);transform-origin:0 0;"><span id="t31c058d3c7">Prům. doba trvání</span></div>
<div class="t" style="left:2445.0px;top:1704.1px;font-size:22.5px;color:#222;font-weight:700;font-family:'Liberation Sans';transform:scaleX(0.9222);transform-origin:0 0;"><span id="tdf817abce9">relace</span></div>
<div class="b" style="left:2517.4px;top:1689.0px;width:28px;height:28px;border-radius:50%;background:#fff;box-shadow:0 0 0 1px #e0e0e0;"></div>
<div class="t" style="left:531.4px;top:1703.2px;width:4000px;text-align:center;font-size:21px;color:#bdbdbd;font-weight:400;font-family:'Liberation Sans';-webkit-text-stroke:0.46px #bdbdbd;"><span id="t17beb082cb">?</span></div>
<div class="t" style="left:2652.8px;top:1668.1px;font-size:22.5px;color:#222;font-weight:700;font-family:'Liberation Sans';transform:scaleX(0.9142);transform-origin:0 0;"><span id="te18781bff1">Konverzní poměr</span></div>
<div class="t" style="left:2693.3px;top:1704.1px;font-size:22.5px;color:#222;font-weight:700;font-family:'Liberation Sans';transform:scaleX(0.9165);transform-origin:0 0;"><span id="t9ab9b06966">cíle</span></div>
<div class="b" style="left:2740.7px;top:1689.0px;width:28px;height:28px;border-radius:50%;background:#fff;box-shadow:0 0 0 1px #e0e0e0;"></div>
<div class="t" style="left:754.7px;top:1703.2px;width:4000px;text-align:center;font-size:21px;color:#bdbdbd;font-weight:400;font-family:'Liberation Sans';-webkit-text-stroke:0.46px #bdbdbd;"><span id="t9c5453c17f">?</span></div>
<div class="t" style="left:2879.5px;top:1668.1px;font-size:22.5px;color:#222;font-weight:700;font-family:'Liberation Sans';transform:scaleX(0.9083);transform-origin:0 0;"><span id="tc361e5b942">Splnění cílů</span></div>
<div class="b" style="left:2922.8px;top:1689.0px;width:28px;height:28px;border-radius:50%;background:#fff;box-shadow:0 0 0 1px #e0e0e0;"></div>
<div class="t" style="left:936.8px;top:1703.2px;width:4000px;text-align:center;font-size:21px;color:#bdbdbd;font-weight:400;font-family:'Liberation Sans';-webkit-text-stroke:0.46px #bdbdbd;"><span id="t6d340338a4">?</span></div>
<div class="t" style="left:3045.4px;top:1691.9px;font-size:22.5px;color:#222;font-weight:700;font-family:'Liberation Sans';transform:scaleX(0.9228);transform-origin:0 0;"><span id="t23f246c920">Hodnota cíle</span></div>
<div class="b" style="left:3182.6px;top:1677.0px;width:28px;height:28px;border-radius:50%;background:#fff;box-shadow:0 0 0 1px #e0e0e0;"></div>
<div class="t" style="left:1196.6px;top:1691.2px;width:4000px;text-align:center;font-size:21px;color:#bdbdbd;font-weight:400;font-family:'Liberation Sans';-webkit-text-stroke:0.46px #bdbdbd;"><span id="t8c0122d61c">?</span></div>
<div class="t" style="left:-2552.4px;top:1776.8px;width:4000px;text-align:right;font-size:40px;color:#333;font-weight:400;font-family:'Liberation Sans';transform:scaleX(0.9748);transform-origin:100% 0;"><span id="tef9fe32fe3">1 105 691</span></div>
<div class="t" style="left:-2550.4px;top:1811.2px;width:4000px;text-align:right;font-size:21px;color:#8a8a8a;font-weight:400;font-family:'Liberation Sans';"><span id="t5b2f557a5d">Podíl z celku v %:</span></div>
<div class="t" style="left:-2550.4px;top:1834.8px;width:4000px;text-align:right;font-size:21px;color:#8a8a8a;font-weight:400;font-family:'Liberation Sans';"><span id="tac7de537e9">39,46 % (2 802 141)</span></div>
<div class="t" style="left:-2316.3px;top:1776.8px;width:4000px;text-align:right;font-size:40px;color:#333;font-weight:400;font-family:'Liberation Sans';transform:scaleX(0.9748);transform-origin:100% 0;"><span id="tda9d3b08b9">1 081 405</span></div>
<div class="t" style="left:-2314.3px;top:1811.2px;width:4000px;text-align:right;font-size:21px;color:#8a8a8a;font-weight:400;font-family:'Liberation Sans';"><span id="t4c95941ece">Podíl z celku v %:</span></div>
<div class="t" style="left:-2314.3px;top:1834.8px;width:4000px;text-align:right;font-size:21px;color:#8a8a8a;font-weight:400;font-family:'Liberation Sans';"><span id="t61e9d47daf">41,82 % (2 585 822)</span></div>
<div class="t" style="left:-2083.0px;top:1776.8px;width:4000px;text-align:right;font-size:40px;color:#333;font-weight:400;font-family:'Liberation Sans';transform:scaleX(0.9748);transform-origin:100% 0;"><span id="t9727f4cb8a">2 820 320</span></div>
<div class="t" style="left:-2081.0px;top:1811.2px;width:4000px;text-align:right;font-size:21px;color:#8a8a8a;font-weight:400;font-family:'Liberation Sans';"><span id="ta782cfbca9">Podíl z celku v %:</span></div>
<div class="t" style="left:-2081.0px;top:1834.8px;width:4000px;text-align:right;font-size:21px;color:#8a8a8a;font-weight:400;font-family:'Liberation Sans';"><span id="tc143fa7b67">41,27 % (6 833 973)</span></div>
<div class="t" style="left:-1851.8px;top:1776.8px;width:4000px;text-align:right;font-size:40px;color:#333;font-weight:400;font-family:'Liberation Sans';transform:scaleX(0.9131);transform-origin:100% 0;"><span id="t4f670dd684">57,02 %</span></div>
<div class="t" style="left:-1849.8px;top:1811.2px;width:4000px;text-align:right;font-size:21px;color:#8a8a8a;font-weight:400;font-family:'Liberation Sans';"><span id="t939e1400ba">Prům. pro výběr</span></div>
<div class="t" style="left:-1849.8px;top:1834.8px;width:4000px;text-align:right;font-size:21px;color:#8a8a8a;font-weight:400;font-family:'Liberation Sans';"><span id="t1bccb3bcf1">dat: 52,26 %</span></div>
<div class="t" style="left:-1849.8px;top:1858.4px;width:4000px;text-align:right;font-size:21px;color:#8a8a8a;font-weight:400;font-family:'Liberation Sans';"><span id="t849b03960a">(9,11 %)</span></div>
<div class="t" style="left:-1641.3px;top:1776.8px;width:4000px;text-align:right;font-size:40px;color:#333;font-weight:400;font-family:'Liberation Sans';transform:scaleX(0.9445);transform-origin:100% 0;"><span id="t1a4936497f">3,73</span></div>
<div class="t" style="left:-1639.3px;top:1811.2px;width:4000px;text-align:right;font-size:21px;color:#8a8a8a;font-weight:400;font-family:'Liberation Sans';"><span id="t6de83f7ee1">Prům. pro výběr</span></div>
<div class="t" style="left:-1639.3px;top:1834.8px;width:4000px;text-align:right;font-size:21px;color:#8a8a8a;font-weight:400;font-family:'Liberation Sans';"><span id="t53e51e35c2">dat: 3,54 (5,55 %)</span></div>
<div class="t" style="left:-1393.7px;top:1776.8px;width:4000px;text-align:right;font-size:40px;color:#333;font-weight:400;font-family:'Liberation Sans';transform:scaleX(0.9704);transform-origin:100% 0;"><span id="t7b4aadb9e0">00:01:47</span></div>
<div class="t" style="left:-1391.7px;top:1811.2px;width:4000px;text-align:right;font-size:21px;color:#8a8a8a;font-weight:400;font-family:'Liberation Sans';"><span id="t3aae09c879">Prům. pro výběr dat:</span></div>
<div class="t" style="left:-1391.7px;top:1834.8px;width:4000px;text-align:right;font-size:21px;color:#8a8a8a;font-weight:400;font-family:'Liberation Sans';"><span id="t6fe5a8ab6e">00:02:08 (-15,95 %)</span></div>
<div class="t" style="left:-1169.0px;top:1776.8px;width:4000px;text-align:right;font-size:40px;color:#333;font-weight:400;font-family:'Liberation Sans';transform:scaleX(0.9000);transform-origin:100% 0;"><span id="t0a444a5d65">0,00 %</span></div>
<div class="t" style="left:-1167.0px;top:1811.2px;width:4000px;text-align:right;font-size:21px;color:#8a8a8a;font-weight:400;font-family:'Liberation Sans';"><span id="t27875a0a0a">Prům. pro výběr</span></div>
<div class="t" style="left:-1167.0px;top:1834.8px;width:4000px;text-align:right;font-size:21px;color:#8a8a8a;font-weight:400;font-family:'Liberation Sans';"><span id="t9f1a95aa68">dat: 0,00 %</span></div>
<div class="t" style="left:-1167.0px;top:1858.4px;width:4000px;text-align:right;font-size:21px;color:#8a8a8a;font-weight:400;font-family:'Liberation Sans';"><span id="tbc136b6f42">(0,00 %)</span></div>
<div class="t" style="left:-994.0px;top:1776.8px;width:4000px;text-align:right;font-size:40px;color:#333;font-weight:400;font-family:'Liberation Sans';transform:scaleX(0.9866);transform-origin:100% 0;"><span id="tb8083c092a">0</span></div>
<div class="t" style="left:-992.0px;top:1811.2px;width:4000px;text-align:right;font-size:21px;color:#8a8a8a;font-weight:400;font-family:'Liberation Sans';"><span id="tb239201a68">Podíl z celku v</span></div>
<div class="t" style="left:-992.0px;top:1834.8px;width:4000px;text-align:right;font-size:21px;color:#8a8a8a;font-weight:400;font-family:'Liberation Sans';"><span id="t84768f7420">%: 0,00 % (0)</span></div>
<div class="t" style="left:-776.0px;top:1776.8px;width:4000px;text-align:right;font-size:40px;color:#333;font-weight:400;font-family:'Liberation Sans';transform:scaleX(0.9514);transform-origin:100% 0;"><span id="tb93065572a">0,00 Kč</span></div>
<div class="t" style="left:-774.0px;top:1811.2px;width:4000px;text-align:right;font-size:21px;color:#8a8a8a;font-weight:400;font-family:'Liberation Sans';"><span id="tae7b0f0f7f">Podíl z celku v %:</span></div>
<div class="t" style="left:-774.0px;top:1834.8px;width:4000px;text-align:right;font-size:21px;color:#8a8a8a;font-weight:400;font-family:'Liberation Sans';"><span id="tb456e5ef7c">0,00 % (0,00 Kč)</span></div>
<div class="b" style="left:674.5px;top:1916.0px;width:24.5px;height:25.0px;border:2px solid #cfcfcf;border-radius:3px;background:#fff;"></div>
<div class="t" style="left:-3231.0px;top:1927.9px;width:4000px;text-align:right;font-size:26px;color:#222;font-weight:400;font-family:'Liberation Sans';transform:scaleX(0.9735);transform-origin:100% 0;"><span id="tb428b9b2c3">1.</span></div>
<div class="t" style="left:800.2px;top:1927.9px;font-size:26px;color:#1a5ea8;font-weight:400;font-family:'Liberation Sans';transform:scaleX(0.9787);transform-origin:0 0;"><span id="t7c65af807d">15.3.1</span></div>
<div class="t" style="left:-2647.0px;top:1927.9px;width:4000px;text-align:right;font-size:26px;color:#111;font-weight:700;font-family:'Liberation Sans';transform:scaleX(0.9977);transform-origin:100% 0;"><span id="t55f67044e3">254 716</span></div>
<div class="t" style="left:-2546.6px;top:1929.3px;width:4000px;text-align:right;font-size:22px;color:#8a8a8a;font-weight:700;font-family:'Liberation Sans';transform:scaleX(0.9490);transform-origin:100% 0;"><span id="t5f90dd6aa3">(21,34 %)</span></div>
<div class="t" style="left:-2413.0px;top:1927.9px;width:4000px;text-align:right;font-size:26px;color:#222;font-weight:400;font-family:'Liberation Sans';transform:scaleX(0.9794);transform-origin:100% 0;"><span id="t1ba7fed18b">238 092</span></div>
<div class="t" style="left:-2313.0px;top:1929.3px;width:4000px;text-align:right;font-size:22px;color:#8a8a8a;font-weight:400;font-family:'Liberation Sans';transform:scaleX(0.9317);transform-origin:100% 0;"><span id="t97553d4bb3">(22,02 %)</span></div>
<div class="t" style="left:-2178.3px;top:1927.9px;width:4000px;text-align:right;font-size:26px;color:#222;font-weight:400;font-family:'Liberation Sans';transform:scaleX(0.9794);transform-origin:100% 0;"><span id="t80cb62720f">621 883</span></div>
<div class="t" style="left:-2078.4px;top:1929.3px;width:4000px;text-align:right;font-size:22px;color:#8a8a8a;font-weight:400;font-family:'Liberation Sans';transform:scaleX(0.9317);transform-origin:100% 0;"><span id="t22f82b8fda">(22,05 %)</span></div>
<div class="t" style="left:-1847.0px;top:1927.9px;width:4000px;text-align:right;font-size:26px;color:#222;font-weight:400;font-family:'Liberation Sans';transform:scaleX(0.9131);transform-origin:100% 0;"><span id="t76e305abfb">58,04 %</span></div>
<div class="t" style="left:-1636.0px;top:1927.9px;width:4000px;text-align:right;font-size:26px;color:#222;font-weight:400;font-family:'Liberation Sans';transform:scaleX(0.9444);transform-origin:100% 0;"><span id="t66ef1185f0">3,82</span></div>
<div class="t" style="left:-1388.3px;top:1927.9px;width:4000px;text-align:right;font-size:26px;color:#222;font-weight:400;font-family:'Liberation Sans';transform:scaleX(0.9703);transform-origin:100% 0;"><span id="t8b5ac3821a">00:01:49</span></div>
<div class="t" style="left:-1166.0px;top:1927.9px;width:4000px;text-align:right;font-size:26px;color:#222;font-weight:400;font-family:'Liberation Sans';transform:scaleX(0.8999);transform-origin:100% 0;"><span id="t1b40e49bcd">0,00 %</span></div>
<div class="t" style="left:-1088.0px;top:1927.9px;width:4000px;text-align:right;font-size:26px;color:#222;font-weight:400;font-family:'Liberation Sans';transform:scaleX(0.9861);transform-origin:100% 0;"><span id="t3e181ad163">0</span></div>
<div class="t" style="left:-988.3px;top:1929.3px;width:4000px;text-align:right;font-size:22px;color:#8a8a8a;font-weight:400;font-family:'Liberation Sans';transform:scaleX(0.9237);transform-origin:100% 0;"><span id="ta390287982">(0,00 %)</span></div>
<div class="t" style="left:-870.2px;top:1927.9px;width:4000px;text-align:right;font-size:26px;color:#222;font-weight:400;font-family:'Liberation Sans';transform:scaleX(0.9514);transform-origin:100% 0;"><span id="t8d84f72446">0,00 Kč</span></div>
<div class="t" style="left:-771.0px;top:1929.3px;width:4000px;text-align:right;font-size:22px;color:#8a8a8a;font-weight:400;font-family:'Liberation Sans';transform:scaleX(0.9237);transform-origin:100% 0;"><span id="t495bc52fbb">(0,00 %)</span></div>
<div class="b" style="left:674.5px;top:1986.0px;width:24.5px;height:25.0px;border:2px solid #cfcfcf;border-radius:3px;background:#fff;"></div>
<div class="t" style="left:-3231.0px;top:1997.9px;width:4000px;text-align:right;font-size:26px;color:#222;font-weight:400;font-family:'Liberation Sans';transform:scaleX(0.9735);transform-origin:100% 0;"><span id="tc09c4fdfbb">2.</span></div>
<div class="t" style="left:800.2px;top:1997.9px;font-size:26px;color:#1a5ea8;font-weight:400;font-family:'Liberation Sans';transform:scaleX(0.9787);transform-origin:0 0;"><span id="tcf593b9ed4">15.2.1</span></div>
<div class="t" style="left:-2647.0px;top:1997.9px;width:4000px;text-align:right;font-size:26px;color:#111;font-weight:700;font-family:'Liberation Sans';transform:scaleX(0.9977);transform-origin:100% 0;"><span id="t4eb2eb9657">177 434</span></div>
<div class="t" style="left:-2546.6px;top:1999.3px;width:4000px;text-align:right;font-size:22px;color:#8a8a8a;font-weight:700;font-family:'Liberation Sans';transform:scaleX(0.9490);transform-origin:100% 0;"><span id="t7e49c9d806">(14,87 %)</span></div>
<div class="t" style="left:-2413.0px;top:1997.9px;width:4000px;text-align:right;font-size:26px;color:#222;font-weight:400;font-family:'Liberation Sans';transform:scaleX(0.9794);transform-origin:100% 0;"><span id="ta3301ade04">157 082</span></div>
<div class="t" style="left:-2313.0px;top:1999.3px;width:4000px;text-align:right;font-size:22px;color:#8a8a8a;font-weight:400;font-family:'Liberation Sans';transform:scaleX(0.9317);transform-origin:100% 0;"><span id="t1928e38f9c">(14,53 %)</span></div>
<div class="t" style="left:-2178.3px;top:1997.9px;width:4000px;text-align:right;font-size:26px;color:#222;font-weight:400;font-family:'Liberation Sans';transform:scaleX(0.9794);transform-origin:100% 0;"><span id="tec301958eb">386 280</span></div>
<div class="t" style="left:-2078.4px;top:1999.3px;width:4000px;text-align:right;font-size:22px;color:#8a8a8a;font-weight:400;font-family:'Liberation Sans';transform:scaleX(0.9317);transform-origin:100% 0;"><span id="tf890997b37">(13,70 %)</span></div>
<div class="t" style="left:-1847.0px;top:1997.9px;width:4000px;text-align:right;font-size:26px;color:#222;font-weight:400;font-family:'Liberation Sans';transform:scaleX(0.9131);transform-origin:100% 0;"><span id="t50d229fc24">59,17 %</span></div>
<div class="t" style="left:-1636.0px;top:1997.9px;width:4000px;text-align:right;font-size:26px;color:#222;font-weight:400;font-family:'Liberation Sans';transform:scaleX(0.9444);transform-origin:100% 0;"><span id="t989967b347">3,59</span></div>
<div class="t" style="left:-1388.3px;top:1997.9px;width:4000px;text-align:right;font-size:26px;color:#222;font-weight:400;font-family:'Liberation Sans';transform:scaleX(0.9703);transform-origin:100% 0;"><span id="tfab40017f0">00:01:39</span></div>
<div class="t" style="left:-1166.0px;top:1997.9px;width:4000px;text-align:right;font-size:26px;color:#222;font-weight:400;font-family:'Liberation Sans';transform:scaleX(0.8999);transform-origin:100% 0;"><span id="tf7f525674a">0,00 %</span></div>
<div class="t" style="left:-1088.0px;top:1997.9px;width:4000px;text-align:right;font-size:26px;color:#222;font-weight:400;font-family:'Liberation Sans';transform:scaleX(0.9861);transform-origin:100% 0;"><span id="t90a5aab975">0</span></div>
<div class="t" style="left:-988.3px;top:1999.3px;width:4000px;text-align:right;font-size:22px;color:#8a8a8a;font-weight:400;font-family:'Liberation Sans';transform:scaleX(0.9237);transform-origin:100% 0;"><span id="t83680b8df4">(0,00 %)</span></div>
<div class="t" style="left:-870.2px;top:1997.9px;width:4000px;text-align:right;font-size:26px;color:#222;font-weight:400;font-family:'Liberation Sans';transform:scaleX(0.9514);transform-origin:100% 0;"><span id="t2afa894716">0,00 Kč</span></div>
<div class="t" style="left:-771.0px;top:1999.3px;width:4000px;text-align:right;font-size:22px;color:#8a8a8a;font-weight:400;font-family:'Liberation Sans';transform:scaleX(0.9237);transform-origin:100% 0;"><span id="ta954aeb5a6">(0,00 %)</span></div>
<div class="b" style="left:674.5px;top:2056.0px;width:24.5px;height:25.0px;border:2px solid #cfcfcf;border-radius:3px;background:#fff;"></div>
<div class="t" style="left:-3231.0px;top:2067.9px;width:4000px;text-align:right;font-size:26px;color:#222;font-weight:400;font-family:'Liberation Sans';transform:scaleX(0.9735);transform-origin:100% 0;"><span id="ta9fdfcc5de">3.</span></div>
<div class="t" style="left:800.2px;top:2067.9px;font-size:26px;color:#1a5ea8;font-weight:400;font-family:'Liberation Sans';transform:scaleX(0.9811);transform-origin:0 0;"><span id="tdfa3b2b13e">15.3</span></div>
<div class="t" style="left:-2647.0px;top:2067.9px;width:4000px;text-align:right;font-size:26px;color:#111;font-weight:700;font-family:'Liberation Sans';transform:scaleX(0.9977);transform-origin:100% 0;"><span id="t00014a90ce">156 810</span></div>
<div class="t" style="left:-2546.6px;top:2069.3px;width:4000px;text-align:right;font-size:22px;color:#8a8a8a;font-weight:700;font-family:'Liberation Sans';transform:scaleX(0.9490);transform-origin:100% 0;"><span id="t0be4b137a8">(13,14 %)</span></div>
<div class="t" style="left:-2413.0px;top:2067.9px;width:4000px;text-align:right;font-size:26px;color:#222;font-weight:400;font-family:'Liberation Sans';transform:scaleX(0.9794);transform-origin:100% 0;"><span id="t3cc627ddb6">133 584</span></div>
<div class="t" style="left:-2313.0px;top:2069.3px;width:4000px;text-align:right;font-size:22px;color:#8a8a8a;font-weight:400;font-family:'Liberation Sans';transform:scaleX(0.9317);transform-origin:100% 0;"><span id="ta6dd2a5a2e">(12,35 %)</span></div>
<div class="t" style="left:-2178.3px;top:2067.9px;width:4000px;text-align:right;font-size:26px;color:#222;font-weight:400;font-family:'Liberation Sans';transform:scaleX(0.9794);transform-origin:100% 0;"><span id="t3e92786700">429 680</span></div>
<div class="t" style="left:-2078.4px;top:2069.3px;width:4000px;text-align:right;font-size:22px;color:#8a8a8a;font-weight:400;font-family:'Liberation Sans';transform:scaleX(0.9317);transform-origin:100% 0;"><span id="t11041a7718">(15,24 %)</span></div>
<div class="t" style="left:-1847.0px;top:2067.9px;width:4000px;text-align:right;font-size:26px;color:#222;font-weight:400;font-family:'Liberation Sans';transform:scaleX(0.9131);transform-origin:100% 0;"><span id="t807343ce1c">56,81 %</span></div>
<div class="t" style="left:-1636.0px;top:2067.9px;width:4000px;text-align:right;font-size:26px;color:#222;font-weight:400;font-family:'Liberation Sans';transform:scaleX(0.9444);transform-origin:100% 0;"><span id="t5bb8003581">3,93</span></div>
<div class="t" style="left:-1388.3px;top:2067.9px;width:4000px;text-align:right;font-size:26px;color:#222;font-weight:400;font-family:'Liberation Sans';transform:scaleX(0.9703);transform-origin:100% 0;"><span id="t6efb80fb76">00:01:46</span></div>
<div class="t" style="left:-1166.0px;top:2067.9px;width:4000px;text-align:right;font-size:26px;color:#222;font-weight:400;font-family:'Liberation Sans';transform:scaleX(0.8999);transform-origin:100% 0;"><span id="t50dcd10a39">0,00 %</span></div>
<div class="t" style="left:-1088.0px;top:2067.9px;width:4000px;text-align:right;font-size:26px;color:#222;font-weight:400;font-family:'Liberation Sans';transform:scaleX(0.9861);transform-origin:100% 0;"><span id="t949148a154">0</span></div>
<div class="t" style="left:-988.3px;top:2069.3px;width:4000px;text-align:right;font-size:22px;color:#8a8a8a;font-weight:400;font-family:'Liberation Sans';transform:scaleX(0.9237);transform-origin:100% 0;"><span id="t0312dfab77">(0,00 %)</span></div>
<div class="t" style="left:-870.2px;top:2067.9px;width:4000px;text-align:right;font-size:26px;color:#222;font-weight:400;font-family:'Liberation Sans';transform:scaleX(0.9514);transform-origin:100% 0;"><span id="t7f2b4b482f">0,00 Kč</span></div>
<div class="t" style="left:-771.0px;top:2069.3px;width:4000px;text-align:right;font-size:22px;color:#8a8a8a;font-weight:400;font-family:'Liberation Sans';transform:scaleX(0.9237);transform-origin:100% 0;"><span id="t8a0b783a96">(0,00 %)</span></div>
<div class="b" style="left:674.5px;top:2126.0px;width:24.5px;height:25.0px;border:2px solid #cfcfcf;border-radius:3px;background:#fff;"></div>
<div class="t" style="left:-3231.0px;top:2137.9px;width:4000px;text-align:right;font-size:26px;color:#222;font-weight:400;font-family:'Liberation Sans';transform:scaleX(0.9735);transform-origin:100% 0;"><span id="tfa555a1279">4.</span></div>
<div class="t" style="left:800.2px;top:2137.9px;font-size:26px;color:#1a5ea8;font-weight:400;font-family:'Liberation Sans';transform:scaleX(0.9811);transform-origin:0 0;"><span id="t0aa8efbe1b">15.1</span></div>
<div class="t" style="left:-2647.0px;top:2137.9px;width:4000px;text-align:right;font-size:26px;color:#111;font-weight:700;font-family:'Liberation Sans';transform:scaleX(0.9977);transform-origin:100% 0;"><span id="t3a01ea994f">156 270</span></div>
<div class="t" style="left:-2546.6px;top:2139.3px;width:4000px;text-align:right;font-size:22px;color:#8a8a8a;font-weight:700;font-family:'Liberation Sans';transform:scaleX(0.9490);transform-origin:100% 0;"><span id="tf09a3a1802">(13,09 %)</span></div>
<div class="t" style="left:-2413.0px;top:2137.9px;width:4000px;text-align:right;font-size:26px;color:#222;font-weight:400;font-family:'Liberation Sans';transform:scaleX(0.9794);transform-origin:100% 0;"><span id="t9dda91d5ce">148 571</span></div>
<div class="t" style="left:-2313.0px;top:2139.3px;width:4000px;text-align:right;font-size:22px;color:#8a8a8a;font-weight:400;font-family:'Liberation Sans';transform:scaleX(0.9317);transform-origin:100% 0;"><span id="t30b38b155b">(13,74 %)</span></div>
<div class="t" style="left:-2178.3px;top:2137.9px;width:4000px;text-align:right;font-size:26px;color:#222;font-weight:400;font-family:'Liberation Sans';transform:scaleX(0.9794);transform-origin:100% 0;"><span id="tbe0a3a9d40">302 135</span></div>
<div class="t" style="left:-2078.4px;top:2139.3px;width:4000px;text-align:right;font-size:22px;color:#8a8a8a;font-weight:400;font-family:'Liberation Sans';transform:scaleX(0.9317);transform-origin:100% 0;"><span id="t2d51625a27">(10,71 %)</span></div>
<div class="t" style="left:-1847.0px;top:2137.9px;width:4000px;text-align:right;font-size:26px;color:#222;font-weight:400;font-family:'Liberation Sans';transform:scaleX(0.9131);transform-origin:100% 0;"><span id="tc5b3c074a0">57,42 %</span></div>
<div class="t" style="left:-1636.0px;top:2137.9px;width:4000px;text-align:right;font-size:26px;color:#222;font-weight:400;font-family:'Liberation Sans';transform:scaleX(0.9444);transform-origin:100% 0;"><span id="t9ba50ecf66">3,46</span></div>
<div class="t" style="left:-1388.3px;top:2137.9px;width:4000px;text-align:right;font-size:26px;color:#222;font-weight:400;font-family:'Liberation Sans';transform:scaleX(0.9703);transform-origin:100% 0;"><span id="t1bb116b9c7">00:01:39</span></div>
<div class="t" style="left:-1166.0px;top:2137.9px;width:4000px;text-align:right;font-size:26px;color:#222;font-weight:400;font-family:'Liberation Sans';transform:scaleX(0.8999);transform-origin:100% 0;"><span id="t012e28ba7c">0,00 %</span></div>
<div class="t" style="left:-1088.0px;top:2137.9px;width:4000px;text-align:right;font-size:26px;color:#222;font-weight:400;font-family:'Liberation Sans';transform:scaleX(0.9861);transform-origin:100% 0;"><span id="t91fc716ab2">0</span></div>
<div class="t" style="left:-988.3px;top:2139.3px;width:4000px;text-align:right;font-size:22px;color:#8a8a8a;font-weight:400;font-family:'Liberation Sans';transform:scaleX(0.9237);transform-origin:100% 0;"><span id="ta74d5e1157">(0,00 %)</span></div>
<div class="t" style="left:-870.2px;top:2137.9px;width:4000px;text-align:right;font-size:26px;color:#222;font-weight:400;font-family:'Liberation Sans';transform:scaleX(0.9514);transform-origin:100% 0;"><span id="tdb41b10309">0,00 Kč</span></div>
<div class="t" style="left:-771.0px;top:2139.3px;width:4000px;text-align:right;font-size:22px;color:#8a8a8a;font-weight:400;font-family:'Liberation Sans';transform:scaleX(0.9237);transform-origin:100% 0;"><span id="t572e966e9d">(0,00 %)</span></div>
<div class="b" style="left:674.5px;top:2196.0px;width:24.5px;height:25.0px;border:2px solid #cfcfcf;border-radius:3px;background:#fff;"></div>
<div class="t" style="left:-3231.0px;top:2207.9px;width:4000px;text-align:right;font-size:26px;color:#222;font-weight:400;font-family:'Liberation Sans';transform:scaleX(0.9735);transform-origin:100% 0;"><span id="t2e5d81f110">5.</span></div>
<div class="t" style="left:800.2px;top:2207.9px;font-size:26px;color:#1a5ea8;font-weight:400;font-family:'Liberation Sans';transform:scaleX(0.9811);transform-origin:0 0;"><span id="t0e313617dc">15.2</span></div>
<div class="t" style="left:-2647.0px;top:2207.9px;width:4000px;text-align:right;font-size:26px;color:#111;font-weight:700;font-family:'Liberation Sans';transform:scaleX(0.9977);transform-origin:100% 0;"><span id="t334b44374e">152 440</span></div>
<div class="t" style="left:-2546.6px;top:2209.3px;width:4000px;text-align:right;font-size:22px;color:#8a8a8a;font-weight:700;font-family:'Liberation Sans';transform:scaleX(0.9490);transform-origin:100% 0;"><span id="t0ad485fb94">(12,77 %)</span></div>
<div class="t" style="left:-2413.0px;top:2207.9px;width:4000px;text-align:right;font-size:26px;color:#222;font-weight:400;font-family:'Liberation Sans';transform:scaleX(0.9794);transform-origin:100% 0;"><span id="tc522e8df16">137 794</span></div>
<div class="t" style="left:-2313.0px;top:2209.3px;width:4000px;text-align:right;font-size:22px;color:#8a8a8a;font-weight:400;font-family:'Liberation Sans';transform:scaleX(0.9317);transform-origin:100% 0;"><span id="t3e04b97309">(12,74 %)</span></div>
<div class="t" style="left:-2178.3px;top:2207.9px;width:4000px;text-align:right;font-size:26px;color:#222;font-weight:400;font-family:'Liberation Sans';transform:scaleX(0.9794);transform-origin:100% 0;"><span id="t9460cd8c92">401 952</span></div>
<div class="t" style="left:-2078.4px;top:2209.3px;width:4000px;text-align:right;font-size:22px;color:#8a8a8a;font-weight:400;font-family:'Liberation Sans';transform:scaleX(0.9317);transform-origin:100% 0;"><span id="tbbe930b68c">(14,25 %)</span></div>
<div class="t" style="left:-1847.0px;top:2207.9px;width:4000px;text-align:right;font-size:26px;color:#222;font-weight:400;font-family:'Liberation Sans';transform:scaleX(0.9131);transform-origin:100% 0;"><span id="tabfe3ac030">56,12 %</span></div>
<div class="t" style="left:-1636.0px;top:2207.9px;width:4000px;text-align:right;font-size:26px;color:#222;font-weight:400;font-family:'Liberation Sans';transform:scaleX(0.9444);transform-origin:100% 0;"><span id="t0cc1065227">3,82</span></div>
<div class="t" style="left:-1388.3px;top:2207.9px;width:4000px;text-align:right;font-size:26px;color:#222;font-weight:400;font-family:'Liberation Sans';transform:scaleX(0.9703);transform-origin:100% 0;"><span id="tee6881674d">00:01:48</span></div>
<div class="t" style="left:-1166.0px;top:2207.9px;width:4000px;text-align:right;font-size:26px;color:#222;font-weight:400;font-family:'Liberation Sans';transform:scaleX(0.8999);transform-origin:100% 0;"><span id="t31e938e72b">0,00 %</span></div>
<div class="t" style="left:-1088.0px;top:2207.9px;width:4000px;text-align:right;font-size:26px;color:#222;font-weight:400;font-family:'Liberation Sans';transform:scaleX(0.9861);transform-origin:100% 0;"><span id="t2e3c5a6db5">0</span></div>
<div class="t" style="left:-988.3px;top:2209.3px;width:4000px;text-align:right;font-size:22px;color:#8a8a8a;font-weight:400;font-family:'Liberation Sans';transform:scaleX(0.9237);transform-origin:100% 0;"><span id="t82d3813d3b">(0,00 %)</span></div>
<div class="t" style="left:-870.2px;top:2207.9px;width:4000px;text-align:right;font-size:26px;color:#222;font-weight:400;font-family:'Liberation Sans';transform:scaleX(0.9514);transform-origin:100% 0;"><span id="te29063ab03">0,00 Kč</span></div>
<div class="t" style="left:-771.0px;top:2209.3px;width:4000px;text-align:right;font-size:22px;color:#8a8a8a;font-weight:400;font-family:'Liberation Sans';transform:scaleX(0.9237);transform-origin:100% 0;"><span id="tdc25aa4165">(0,00 %)</span></div>
<div class="b" style="left:674.5px;top:2266.0px;width:24.5px;height:25.0px;border:2px solid #cfcfcf;border-radius:3px;background:#fff;"></div>
<div class="t" style="left:-3231.0px;top:2277.9px;width:4000px;text-align:right;font-size:26px;color:#222;font-weight:400;font-family:'Liberation Sans';transform:scaleX(0.9735);transform-origin:100% 0;"><span id="t0f03c55f45">6.</span></div>
<div class="t" style="left:800.2px;top:2277.9px;font-size:26px;color:#1a5ea8;font-weight:400;font-family:'Liberation Sans';transform:scaleX(0.9811);transform-origin:0 0;"><span id="td3d80ee050">15.4</span></div>
<div class="t" style="left:-2647.0px;top:2277.9px;width:4000px;text-align:right;font-size:26px;color:#111;font-weight:700;font-family:'Liberation Sans';transform:scaleX(0.9975);transform-origin:100% 0;"><span id="tb5474f09a1">87 652</span></div>
<div class="t" style="left:-2546.6px;top:2279.3px;width:4000px;text-align:right;font-size:22px;color:#8a8a8a;font-weight:700;font-family:'Liberation Sans';transform:scaleX(0.9400);transform-origin:100% 0;"><span id="t4a7c7f25a4">(7,34 %)</span></div>
<div class="t" style="left:-2413.0px;top:2277.9px;width:4000px;text-align:right;font-size:26px;color:#222;font-weight:400;font-family:'Liberation Sans';transform:scaleX(0.9780);transform-origin:100% 0;"><span id="t1bc35fe9a5">68 782</span></div>
<div class="t" style="left:-2313.0px;top:2279.3px;width:4000px;text-align:right;font-size:22px;color:#8a8a8a;font-weight:400;font-family:'Liberation Sans';transform:scaleX(0.9237);transform-origin:100% 0;"><span id="t9e32412b62">(6,36 %)</span></div>
<div class="t" style="left:-2178.3px;top:2277.9px;width:4000px;text-align:right;font-size:26px;color:#222;font-weight:400;font-family:'Liberation Sans';transform:scaleX(0.9794);transform-origin:100% 0;"><span id="td8eef45ba0">279 709</span></div>
<div class="t" style="left:-2078.4px;top:2279.3px;width:4000px;text-align:right;font-size:22px;color:#8a8a8a;font-weight:400;font-family:'Liberation Sans';transform:scaleX(0.9237);transform-origin:100% 0;"><span id="t1dc8902abc">(9,92 %)</span></div>
<div class="t" style="left:-1847.0px;top:2277.9px;width:4000px;text-align:right;font-size:26px;color:#222;font-weight:400;font-family:'Liberation Sans';transform:scaleX(0.9131);transform-origin:100% 0;"><span id="te9023eb5ba">52,78 %</span></div>
<div class="t" style="left:-1636.0px;top:2277.9px;width:4000px;text-align:right;font-size:26px;color:#222;font-weight:400;font-family:'Liberation Sans';transform:scaleX(0.9444);transform-origin:100% 0;"><span id="t1f1c199e81">4,10</span></div>
<div class="t" style="left:-1388.3px;top:2277.9px;width:4000px;text-align:right;font-size:26px;color:#222;font-weight:400;font-family:'Liberation Sans';transform:scaleX(0.9703);transform-origin:100% 0;"><span id="tee53b767c1">00:02:10</span></div>
<div class="t" style="left:-1166.0px;top:2277.9px;width:4000px;text-align:right;font-size:26px;color:#222;font-weight:400;font-family:'Liberation Sans';transform:scaleX(0.8999);transform-origin:100% 0;"><span id="t5e1b94e302">0,00 %</span></div>
<div class="t" style="left:-1088.0px;top:2277.9px;width:4000px;text-align:right;font-size:26px;color:#222;font-weight:400;font-family:'Liberation Sans';transform:scaleX(0.9861);transform-origin:100% 0;"><span id="t345d5ae674">0</span></div>
<div class="t" style="left:-988.3px;top:2279.3px;width:4000px;text-align:right;font-size:22px;color:#8a8a8a;font-weight:400;font-family:'Liberation Sans';transform:scaleX(0.9237);transform-origin:100% 0;"><span id="teb1de9bc4d">(0,00 %)</span></div>
<div class="t" style="left:-870.2px;top:2277.9px;width:4000px;text-align:right;font-size:26px;color:#222;font-weight:400;font-family:'Liberation Sans';transform:scaleX(0.9514);transform-origin:100% 0;"><span id="t4063bb4a32">0,00 Kč</span></div>
<div class="t" style="left:-771.0px;top:2279.3px;width:4000px;text-align:right;font-size:22px;color:#8a8a8a;font-weight:400;font-family:'Liberation Sans';transform:scaleX(0.9237);transform-origin:100% 0;"><span id="t7958af235e">(0,00 %)</span></div>
<div class="b" style="left:674.5px;top:2336.0px;width:24.5px;height:25.0px;border:2px solid #cfcfcf;border-radius:3px;background:#fff;"></div>
<div class="t" style="left:-3231.0px;top:2347.9px;width:4000px;text-align:right;font-size:26px;color:#222;font-weight:400;font-family:'Liberation Sans';transform:scaleX(0.9735);transform-origin:100% 0;"><span id="t764a8506b6">7.</span></div>
<div class="t" style="left:800.2px;top:2347.9px;font-size:26px;color:#1a5ea8;font-weight:400;font-family:'Liberation Sans';transform:scaleX(0.9787);transform-origin:0 0;"><span id="tc1b8d8c056">15.1.1</span></div>
<div class="t" style="left:-2647.0px;top:2347.9px;width:4000px;text-align:right;font-size:26px;color:#111;font-weight:700;font-family:'Liberation Sans';transform:scaleX(0.9975);transform-origin:100% 0;"><span id="t08533bddd9">52 725</span></div>
<div class="t" style="left:-2546.6px;top:2349.3px;width:4000px;text-align:right;font-size:22px;color:#8a8a8a;font-weight:700;font-family:'Liberation Sans';transform:scaleX(0.9400);transform-origin:100% 0;"><span id="te3f7279af5">(4,42 %)</span></div>
<div class="t" style="left:-2413.0px;top:2347.9px;width:4000px;text-align:right;font-size:26px;color:#222;font-weight:400;font-family:'Liberation Sans';transform:scaleX(0.9780);transform-origin:100% 0;"><span id="t8bd4c808f5">49 831</span></div>
<div class="t" style="left:-2313.0px;top:2349.3px;width:4000px;text-align:right;font-size:22px;color:#8a8a8a;font-weight:400;font-family:'Liberation Sans';transform:scaleX(0.9237);transform-origin:100% 0;"><span id="te63efc6bba">(4,61 %)</span></div>
<div class="t" style="left:-2178.3px;top:2347.9px;width:4000px;text-align:right;font-size:26px;color:#222;font-weight:400;font-family:'Liberation Sans';"><span id="t2173de2158">115 599</span></div>
<div class="t" style="left:-2078.4px;top:2349.3px;width:4000px;text-align:right;font-size:22px;color:#8a8a8a;font-weight:400;font-family:'Liberation Sans';transform:scaleX(0.9237);transform-origin:100% 0;"><span id="t77d1320130">(4,10 %)</span></div>
<div class="t" style="left:-1847.0px;top:2347.9px;width:4000px;text-align:right;font-size:26px;color:#222;font-weight:400;font-family:'Liberation Sans';transform:scaleX(0.9131);transform-origin:100% 0;"><span id="t87c27022c9">57,37 %</span></div>
<div class="t" style="left:-1636.0px;top:2347.9px;width:4000px;text-align:right;font-size:26px;color:#222;font-weight:400;font-family:'Liberation Sans';transform:scaleX(0.9444);transform-origin:100% 0;"><span id="teaeb397f52">3,47</span></div>
<div class="t" style="left:-1388.3px;top:2347.9px;width:4000px;text-align:right;font-size:26px;color:#222;font-weight:400;font-family:'Liberation Sans';transform:scaleX(0.9703);transform-origin:100% 0;"><span id="t62394ac087">00:01:37</span></div>
<div class="t" style="left:-1166.0px;top:2347.9px;width:4000px;text-align:right;font-size:26px;color:#222;font-weight:400;font-family:'Liberation Sans';transform:scaleX(0.8999);transform-origin:100% 0;"><span id="t46abb61a2e">0,00 %</span></div>
<div class="t" style="left:-1088.0px;top:2347.9px;width:4000px;text-align:right;font-size:26px;color:#222;font-weight:400;font-family:'Liberation Sans';transform:scaleX(0.9861);transform-origin:100% 0;"><span id="ta3e8cd15d8">0</span></div>
<div class="t" style="left:-988.3px;top:2349.3px;width:4000px;text-align:right;font-size:22px;color:#8a8a8a;font-weight:400;font-family:'Liberation Sans';transform:scaleX(0.9237);transform-origin:100% 0;"><span id="tdb84c0366d">(0,00 %)</span></div>
<div class="t" style="left:-870.2px;top:2347.9px;width:4000px;text-align:right;font-size:26px;color:#222;font-weight:400;font-family:'Liberation Sans';transform:scaleX(0.9514);transform-origin:100% 0;"><span id="t5fecc6b7fb">0,00 Kč</span></div>
<div class="t" style="left:-771.0px;top:2349.3px;width:4000px;text-align:right;font-size:22px;color:#8a8a8a;font-weight:400;font-family:'Liberation Sans';transform:scaleX(0.9237);transform-origin:100% 0;"><span id="tfbd73d9cfb">(0,00 %)</span></div>
<div class="b" style="left:674.5px;top:2406.0px;width:24.5px;height:25.0px;border:2px solid #cfcfcf;border-radius:3px;background:#fff;"></div>
<div class="t" style="left:-3231.0px;top:2417.9px;width:4000px;text-align:right;font-size:26px;color:#222;font-weight:400;font-family:'Liberation Sans';transform:scaleX(0.9735);transform-origin:100% 0;"><span id="t201f7bec2f">8.</span></div>
<div class="t" style="left:800.2px;top:2417.9px;font-size:26px;color:#1a5ea8;font-weight:400;font-family:'Liberation Sans';transform:scaleX(0.9787);transform-origin:0 0;"><span id="tc41f84dfa3">14.8.1</span></div>
<div class="t" style="left:-2647.0px;top:2417.9px;width:4000px;text-align:right;font-size:26px;color:#111;font-weight:700;font-family:'Liberation Sans';transform:scaleX(0.9975);transform-origin:100% 0;"><span id="td61a7ab556">36 093</span></div>
<div class="t" style="left:-2546.6px;top:2419.3px;width:4000px;text-align:right;font-size:22px;color:#8a8a8a;font-weight:700;font-family:'Liberation Sans';transform:scaleX(0.9400);transform-origin:100% 0;"><span id="ted82f198a4">(3,02 %)</span></div>
<div class="t" style="left:-2413.0px;top:2417.9px;width:4000px;text-align:right;font-size:26px;color:#222;font-weight:400;font-family:'Liberation Sans';transform:scaleX(0.9780);transform-origin:100% 0;"><span id="t3d5a588791">35 175</span></div>
<div class="t" style="left:-2313.0px;top:2419.3px;width:4000px;text-align:right;font-size:22px;color:#8a8a8a;font-weight:400;font-family:'Liberation Sans';transform:scaleX(0.9237);transform-origin:100% 0;"><span id="tc30943b4d4">(3,25 %)</span></div>
<div class="t" style="left:-2178.3px;top:2417.9px;width:4000px;text-align:right;font-size:26px;color:#222;font-weight:400;font-family:'Liberation Sans';transform:scaleX(0.9780);transform-origin:100% 0;"><span id="t8e49470f3d">61 083</span></div>
<div class="t" style="left:-2078.4px;top:2419.3px;width:4000px;text-align:right;font-size:22px;color:#8a8a8a;font-weight:400;font-family:'Liberation Sans';transform:scaleX(0.9237);transform-origin:100% 0;"><span id="t589efc9d4c">(2,17 %)</span></div>
<div class="t" style="left:-1847.0px;top:2417.9px;width:4000px;text-align:right;font-size:26px;color:#222;font-weight:400;font-family:'Liberation Sans';transform:scaleX(0.9131);transform-origin:100% 0;"><span id="ta623307425">56,58 %</span></div>
<div class="t" style="left:-1636.0px;top:2417.9px;width:4000px;text-align:right;font-size:26px;color:#222;font-weight:400;font-family:'Liberation Sans';transform:scaleX(0.9444);transform-origin:100% 0;"><span id="tdd346b8045">3,24</span></div>
<div class="t" style="left:-1388.3px;top:2417.9px;width:4000px;text-align:right;font-size:26px;color:#222;font-weight:400;font-family:'Liberation Sans';transform:scaleX(0.9703);transform-origin:100% 0;"><span id="tfa82cd8ff2">00:01:42</span></div>
<div class="t" style="left:-1166.0px;top:2417.9px;width:4000px;text-align:right;font-size:26px;color:#222;font-weight:400;font-family:'Liberation Sans';transform:scaleX(0.8999);transform-origin:100% 0;"><span id="t99433cd6ea">0,00 %</span></div>
<div class="t" style="left:-1088.0px;top:2417.9px;width:4000px;text-align:right;font-size:26px;color:#222;font-weight:400;font-family:'Liberation Sans';transform:scaleX(0.9861);transform-origin:100% 0;"><span id="t3f99e71591">0</span></div>
<div class="t" style="left:-988.3px;top:2419.3px;width:4000px;text-align:right;font-size:22px;color:#8a8a8a;font-weight:400;font-family:'Liberation Sans';transform:scaleX(0.9237);transform-origin:100% 0;"><span id="t905b66d9aa">(0,00 %)</span></div>
<div class="t" style="left:-870.2px;top:2417.9px;width:4000px;text-align:right;font-size:26px;color:#222;font-weight:400;font-family:'Liberation Sans';transform:scaleX(0.9514);transform-origin:100% 0;"><span id="t5fb9b9e352">0,00 Kč</span></div>
<div class="t" style="left:-771.0px;top:2419.3px;width:4000px;text-align:right;font-size:22px;color:#8a8a8a;font-weight:400;font-family:'Liberation Sans';transform:scaleX(0.9237);transform-origin:100% 0;"><span id="tcaf8772f6d">(0,00 %)</span></div>
<div class="b" style="left:674.5px;top:2476.0px;width:24.5px;height:25.0px;border:2px solid #cfcfcf;border-radius:3px;background:#fff;"></div>
<div class="t" style="left:-3231.0px;top:2487.9px;width:4000px;text-align:right;font-size:26px;color:#222;font-weight:400;font-family:'Liberation Sans';transform:scaleX(0.9735);transform-origin:100% 0;"><span id="tecc2a5de5e">9.</span></div>
<div class="t" style="left:800.2px;top:2487.9px;font-size:26px;color:#1a5ea8;font-weight:400;font-family:'Liberation Sans';transform:scaleX(0.9787);transform-origin:0 0;"><span id="t1ea5df34e9">14.7.1</span></div>
<div class="t" style="left:-2647.0px;top:2487.9px;width:4000px;text-align:right;font-size:26px;color:#111;font-weight:700;font-family:'Liberation Sans';transform:scaleX(0.9975);transform-origin:100% 0;"><span id="t8214ae7082">17 507</span></div>
<div class="t" style="left:-2546.6px;top:2489.3px;width:4000px;text-align:right;font-size:22px;color:#8a8a8a;font-weight:700;font-family:'Liberation Sans';transform:scaleX(0.9400);transform-origin:100% 0;"><span id="t465dde0389">(1,47 %)</span></div>
<div class="t" style="left:-2413.0px;top:2487.9px;width:4000px;text-align:right;font-size:26px;color:#222;font-weight:400;font-family:'Liberation Sans';transform:scaleX(0.9780);transform-origin:100% 0;"><span id="tad81e7c7d6">17 386</span></div>
<div class="t" style="left:-2313.0px;top:2489.3px;width:4000px;text-align:right;font-size:22px;color:#8a8a8a;font-weight:400;font-family:'Liberation Sans';transform:scaleX(0.9237);transform-origin:100% 0;"><span id="t204eb71499">(1,61 %)</span></div>
<div class="t" style="left:-2178.3px;top:2487.9px;width:4000px;text-align:right;font-size:26px;color:#222;font-weight:400;font-family:'Liberation Sans';transform:scaleX(0.9780);transform-origin:100% 0;"><span id="t90bf45c04a">29 069</span></div>
<div class="t" style="left:-2078.4px;top:2489.3px;width:4000px;text-align:right;font-size:22px;color:#8a8a8a;font-weight:400;font-family:'Liberation Sans';transform:scaleX(0.9237);transform-origin:100% 0;"><span id="tffeafeffb9">(1,03 %)</span></div>
<div class="t" style="left:-1847.0px;top:2487.9px;width:4000px;text-align:right;font-size:26px;color:#222;font-weight:400;font-family:'Liberation Sans';transform:scaleX(0.9131);transform-origin:100% 0;"><span id="t488c39e841">60,02 %</span></div>
<div class="t" style="left:-1636.0px;top:2487.9px;width:4000px;text-align:right;font-size:26px;color:#222;font-weight:400;font-family:'Liberation Sans';transform:scaleX(0.9444);transform-origin:100% 0;"><span id="t646ff9026d">3,07</span></div>
<div class="t" style="left:-1388.3px;top:2487.9px;width:4000px;text-align:right;font-size:26px;color:#222;font-weight:400;font-family:'Liberation Sans';transform:scaleX(0.9703);transform-origin:100% 0;"><span id="t39635b4015">00:01:33</span></div>
<div class="t" style="left:-1166.0px;top:2487.9px;width:4000px;text-align:right;font-size:26px;color:#222;font-weight:400;font-family:'Liberation Sans';transform:scaleX(0.8999);transform-origin:100% 0;"><span id="t9339d8c1ee">0,00 %</span></div>
<div class="t" style="left:-1088.0px;top:2487.9px;width:4000px;text-align:right;font-size:26px;color:#222;font-weight:400;font-family:'Liberation Sans';transform:scaleX(0.9861);transform-origin:100% 0;"><span id="t5ecf4bf985">0</span></div>
<div class="t" style="left:-988.3px;top:2489.3px;width:4000px;text-align:right;font-size:22px;color:#8a8a8a;font-weight:400;font-family:'Liberation Sans';transform:scaleX(0.9237);transform-origin:100% 0;"><span id="t43879c5629">(0,00 %)</span></div>
<div class="t" style="left:-870.2px;top:2487.9px;width:4000px;text-align:right;font-size:26px;color:#222;font-weight:400;font-family:'Liberation Sans';transform:scaleX(0.9514);transform-origin:100% 0;"><span id="t986c7928f4">0,00 Kč</span></div>
<div class="t" style="left:-771.0px;top:2489.3px;width:4000px;text-align:right;font-size:22px;color:#8a8a8a;font-weight:400;font-family:'Liberation Sans';transform:scaleX(0.9237);transform-origin:100% 0;"><span id="tbbddb86983">(0,00 %)</span></div>
<div class="b" style="left:674.5px;top:2546.0px;width:24.5px;height:25.0px;border:2px solid #cfcfcf;border-radius:3px;background:#fff;"></div>
<div class="t" style="left:-3231.0px;top:2557.9px;width:4000px;text-align:right;font-size:26px;color:#222;font-weight:400;font-family:'Liberation Sans';transform:scaleX(0.9785);transform-origin:100% 0;"><span id="t9f404df733">10.</span></div>
<div class="t" style="left:800.2px;top:2557.9px;font-size:26px;color:#1a5ea8;font-weight:400;font-family:'Liberation Sans';transform:scaleX(0.9811);transform-origin:0 0;"><span id="tf605ac5d7b">14.8</span></div>
<div class="t" style="left:-2647.0px;top:2557.9px;width:4000px;text-align:right;font-size:26px;color:#111;font-weight:700;font-family:'Liberation Sans';transform:scaleX(0.9975);transform-origin:100% 0;"><span id="t1c9ddee01d">14 507</span></div>
<div class="t" style="left:-2546.6px;top:2559.3px;width:4000px;text-align:right;font-size:22px;color:#8a8a8a;font-weight:700;font-family:'Liberation Sans';transform:scaleX(0.9400);transform-origin:100% 0;"><span id="t8cb746f0fe">(1,22 %)</span></div>
<div class="t" style="left:-2413.0px;top:2557.9px;width:4000px;text-align:right;font-size:26px;color:#222;font-weight:400;font-family:'Liberation Sans';transform:scaleX(0.9780);transform-origin:100% 0;"><span id="t7161ded348">14 271</span></div>
<div class="t" style="left:-2313.0px;top:2559.3px;width:4000px;text-align:right;font-size:22px;color:#8a8a8a;font-weight:400;font-family:'Liberation Sans';transform:scaleX(0.9237);transform-origin:100% 0;"><span id="t61052f67b2">(1,32 %)</span></div>
<div class="t" style="left:-2178.3px;top:2557.9px;width:4000px;text-align:right;font-size:26px;color:#222;font-weight:400;font-family:'Liberation Sans';transform:scaleX(0.9780);transform-origin:100% 0;"><span id="t3cf2061106">25 024</span></div>
<div class="t" style="left:-2078.4px;top:2559.3px;width:4000px;text-align:right;font-size:22px;color:#8a8a8a;font-weight:400;font-family:'Liberation Sans';transform:scaleX(0.9237);transform-origin:100% 0;"><span id="tcbaaa3d81a">(0,89 %)</span></div>
<div class="t" style="left:-1847.0px;top:2557.9px;width:4000px;text-align:right;font-size:26px;color:#222;font-weight:400;font-family:'Liberation Sans';transform:scaleX(0.9131);transform-origin:100% 0;"><span id="t171e1e75e6">62,70 %</span></div>
<div class="t" style="left:-1636.0px;top:2557.9px;width:4000px;text-align:right;font-size:26px;color:#222;font-weight:400;font-family:'Liberation Sans';transform:scaleX(0.9444);transform-origin:100% 0;"><span id="t093286c164">3,31</span></div>
<div class="t" style="left:-1388.3px;top:2557.9px;width:4000px;text-align:right;font-size:26px;color:#222;font-weight:400;font-family:'Liberation Sans';transform:scaleX(0.9703);transform-origin:100% 0;"><span id="tc8f9178167">00:01:31</span></div>
<div class="t" style="left:-1166.0px;top:2557.9px;width:4000px;text-align:right;font-size:26px;color:#222;font-weight:400;font-family:'Liberation Sans';transform:scaleX(0.8999);transform-origin:100% 0;"><span id="t20a2cea035">0,00 %</span></div>
<div class="t" style="left:-1088.0px;top:2557.9px;width:4000px;text-align:right;font-size:26px;color:#222;font-weight:400;font-family:'Liberation Sans';transform:scaleX(0.9861);transform-origin:100% 0;"><span id="t3f7d5d84ac">0</span></div>
<div class="t" style="left:-988.3px;top:2559.3px;width:4000px;text-align:right;font-size:22px;color:#8a8a8a;font-weight:400;font-family:'Liberation Sans';transform:scaleX(0.9237);transform-origin:100% 0;"><span id="t1b41318808">(0,00 %)</span></div>
<div class="t" style="left:-870.2px;top:2557.9px;width:4000px;text-align:right;font-size:26px;color:#222;font-weight:400;font-family:'Liberation Sans';transform:scaleX(0.9514);transform-origin:100% 0;"><span id="t890b751e6b">0,00 Kč</span></div>
<div class="t" style="left:-771.0px;top:2559.3px;width:4000px;text-align:right;font-size:22px;color:#8a8a8a;font-weight:400;font-family:'Liberation Sans';transform:scaleX(0.9237);transform-origin:100% 0;"><span id="t77db1ce9e1">(0,00 %)</span></div>
<div class="t" style="left:2533.7px;top:2633.1px;font-size:24px;color:#222;font-weight:400;font-family:'Liberation Sans';transform:scaleX(0.9028);transform-origin:0 0;"><span id="t74774bf461">Zobrazit řádky:</span></div>
<div class="b" style="left:2690px;top:2618px;width:115px;height:33px;border-radius:6px;background:#fff;box-shadow:0 0 0 1px #d0d0d0,0 1px 2px rgba(0,0,0,0.2);"></div>
<div class="t" style="left:2703.0px;top:2635.6px;font-size:24px;color:#222;font-weight:400;font-family:'Liberation Sans';"><span id="t7f30e2c6fa">10</span></div>
<div class="b" style="left:2776px;top:2622px;width:24px;height:24px;border-radius:5px;background:#3b82f6;"></div>
<svg class="b" style="left:2776.0px;top:2622.0px" width="24" height="24" viewBox="0 0 24 24"><polyline points="8,10 12,6 16,10" fill="none" stroke="#fff" stroke-width="2"/><polyline points="8,14 12,18 16,14" fill="none" stroke="#fff" stroke-width="2"/></svg>
<div class="t" style="left:2816.0px;top:2633.1px;font-size:24px;color:#222;font-weight:400;font-family:'Liberation Sans';transform:scaleX(0.8829);transform-origin:0 0;"><span id="t9c0fa5ca14">Přejít na:</span></div>
<div class="b" style="left:2912.7px;top:2611.0px;width:64.7px;height:47.0px;border:2px solid #bdbdbd;background:#fff;"></div>
<div class="t" style="left:2925.0px;top:2635.6px;font-size:24px;color:#222;font-weight:400;font-family:'Liberation Sans';"><span id="t7682589d67">1</span></div>
<div class="t" style="left:2988.0px;top:2633.1px;font-size:24px;color:#222;font-weight:400;font-family:'Liberation Sans';transform:scaleX(0.9316);transform-origin:0 0;"><span id="t9cce91215a">1–10 z 114</span></div>
<div class="b" style="left:3113px;top:2608px;width:110px;height:45px;border:2px solid #cfcfcf;border-radius:5px;background:linear-gradient(#fdfdfd,#ececec);"></div>
<div class="b" style="left:3167.0px;top:2610.0px;width:2.0px;height:41.0px;background:#cfcfcf;"></div>
<svg class="b" style="left:3130.0px;top:2616.0px" width="24" height="26" viewBox="0 0 24 26"><polyline points="15,5 8,12 15,19" fill="none" stroke="#333" stroke-width="4"/></svg>
<svg class="b" style="left:3182.0px;top:2616.0px" width="24" height="26" viewBox="0 0 24 26"><polyline points="9,5 16,12 9,19" fill="none" stroke="#333" stroke-width="4"/></svg>
<div class="t" style="left:2577.4px;top:2689.3px;font-size:22px;color:#777;font-weight:400;font-family:'Liberation Sans';transform:scaleX(0.9799);transform-origin:0 0;"><span id="t8f3808bf5c">Tento přehled byl vygenerován 03.04.22 v 8:57:43 - <span style="color:#1a5ea8">Obnovit přehled</span></span></div>
<div class="t" style="left:1167.8px;top:2802.8px;font-size:28px;color:#80868b;font-weight:400;font-family:'Liberation Sans';transform:scaleX(1.0682);transform-origin:0 0;-webkit-text-stroke:0.62px #80868b;"><span id="t4f67a94385">© 2022 Google <span style="color:#4f82d8">| Domovská stránka Analytics | Smluvní podmínky | Zásady ochrany soukromí | Odeslat zpětnou vazbu</span></span></div>
</div></body></html>
